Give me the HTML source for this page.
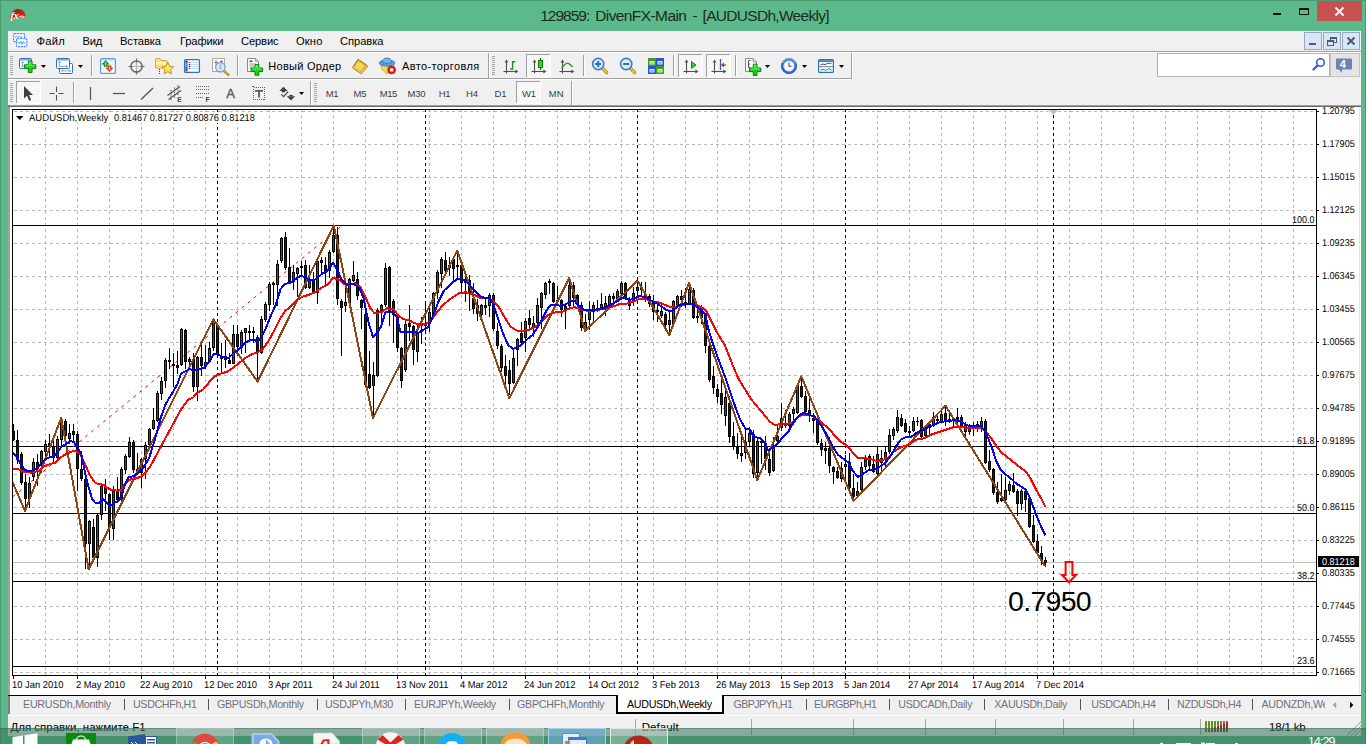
<!DOCTYPE html>
<html><head><meta charset="utf-8"><title>MT4</title>
<style>
html,body{margin:0;padding:0;overflow:hidden;}
body{width:1369px;height:744px;overflow:hidden;background:#fff;position:relative;font-family:"Liberation Sans",sans-serif;}
.abs{position:absolute;}
.t{position:absolute;white-space:nowrap;line-height:1;}
svg{position:absolute;left:0;top:0;overflow:visible;}
#root{position:absolute;left:0;top:0;width:1369px;height:744px;overflow:hidden;}
</style></head><body><div id="root">

<div class="abs" style="left:0;top:0;width:1366px;height:744px;background:#5cb98b;"></div><div class="abs" style="left:0;top:0;width:1366px;height:1px;background:#4a9b72;"></div><div class="abs" style="left:0;top:0;width:1px;height:744px;background:#4a9b72;"></div><div class="abs" style="left:1365px;top:0;width:1px;height:744px;background:#4a9b72;"></div><div class="abs" style="left:8px;top:31px;width:1353px;height:705px;background:#f0f0f0;"></div><div class="t" style="left:540.20px;top:8.38px;font-size:15.5px;color:#1c2a22;letter-spacing:-0.989px;">129859:</div><div class="t" style="left:595.20px;top:8.38px;font-size:15.5px;color:#1c2a22;letter-spacing:-0.591px;">DivenFX-Main</div><div class="t" style="left:692.60px;top:8.38px;font-size:15.5px;color:#1c2a22;">-</div><div class="t" style="left:702.60px;top:8.38px;font-size:15.5px;color:#1c2a22;letter-spacing:-0.701px;">[AUDUSDh,Weekly]</div><div class="abs" style="left:1317px;top:1px;width:45px;height:20px;background:#c75050;"></div><svg width="1369" height="31"><g stroke="#fff" stroke-width="1.8"><line x1="1335.5" y1="7.5" x2="1343.5" y2="15.5"/><line x1="1343.5" y1="7.5" x2="1335.5" y2="15.5"/></g><rect x="1273" y="13" width="8" height="2" fill="#111"/><rect x="1299.5" y="8.5" width="9" height="6" fill="none" stroke="#111"/><rect x="1299" y="8" width="10" height="2" fill="#111"/></svg>
<div class="t" style="left:36.50px;top:35.52px;font-size:11.2px;color:#000;letter-spacing:0.241px;">Файл</div><div class="t" style="left:82.50px;top:35.52px;font-size:11.2px;color:#000;letter-spacing:-0.254px;">Вид</div><div class="t" style="left:120.00px;top:35.52px;font-size:11.2px;color:#000;letter-spacing:-0.090px;">Вставка</div><div class="t" style="left:180.00px;top:35.52px;font-size:11.2px;color:#000;letter-spacing:-0.146px;">Графики</div><div class="t" style="left:241.00px;top:35.52px;font-size:11.2px;color:#000;letter-spacing:-0.142px;">Сервис</div><div class="t" style="left:296.00px;top:35.52px;font-size:11.2px;color:#000;letter-spacing:0.119px;">Окно</div><div class="t" style="left:340.00px;top:35.52px;font-size:11.2px;color:#000;letter-spacing:-0.062px;">Справка</div>
<svg width="1369" height="110"><defs><pattern id="chk" width="2" height="2" patternUnits="userSpaceOnUse"><rect width="2" height="2" fill="#f0f0f0"/><rect width="1" height="1" fill="#fff"/><rect x="1" y="1" width="1" height="1" fill="#fff"/></pattern></defs><rect x="8" y="51" width="1353" height="1" fill="#a0a0a0"/><rect x="8" y="52" width="1353" height="1" fill="#fff"/><rect x="8" y="78" width="843" height="1" fill="#a0a0a0"/><rect x="8" y="79" width="844" height="1" fill="#fff"/><rect x="851" y="53" width="1" height="26" fill="#a0a0a0"/><rect x="852" y="53" width="1" height="27" fill="#fff"/><rect x="10" y="56" width="3" height="1" fill="#a8a8a8"/><rect x="10" y="58" width="3" height="1" fill="#a8a8a8"/><rect x="10" y="60" width="3" height="1" fill="#a8a8a8"/><rect x="10" y="62" width="3" height="1" fill="#a8a8a8"/><rect x="10" y="64" width="3" height="1" fill="#a8a8a8"/><rect x="10" y="66" width="3" height="1" fill="#a8a8a8"/><rect x="10" y="68" width="3" height="1" fill="#a8a8a8"/><rect x="10" y="70" width="3" height="1" fill="#a8a8a8"/><rect x="10" y="72" width="3" height="1" fill="#a8a8a8"/><rect x="10" y="74" width="3" height="1" fill="#a8a8a8"/><rect x="19.5" y="58.5" width="12" height="10" rx="1" fill="#fdfeff" stroke="#2f6fb8"/><rect x="20" y="59" width="11" height="1.6" fill="#7fb0e6"/><path d="M22.5 61.8 V66.8 M21.2 63 L22.5 61.6 L23.8 63 M21.2 65.6 L22.5 67 L23.8 65.6" stroke="#8aa4c4" fill="none" stroke-width="0.9"/><path d="M28.3 61 H32 V64.8 H35.8 V68.6 H32 V72.6 H28.3 V68.6 H24.4 V64.8 H28.3 Z" fill="#19d419" stroke="#0a7f0a" stroke-width="1"/><path d="M29.3 62 H31 V65.8 H34.8 M25.4 65.8 H29.3 V62" stroke="#9dff9d" stroke-width="0.8" fill="none" opacity="0.8"/><path d="M41 65 L46 65 L43.5 68 Z" fill="#000"/><rect x="59.5" y="63.5" width="13" height="10" rx="1" fill="#fdfeff" stroke="#2f6fb8"/><rect x="56.5" y="58.5" width="13" height="10" rx="1" fill="#fdfeff" stroke="#2f6fb8"/><rect x="57" y="59" width="12" height="1.6" fill="#7fb0e6"/><path d="M59.5 61.6 V66.4 M58.3 62.8 L59.5 61.5 L60.7 62.8 M58.5 66.4 H67.5 M66 65.2 L67.6 66.4 L66 67.6" stroke="#7f9fc8" fill="none" stroke-width="0.9"/><path d="M61.5 70.8 H70.5 M62.8 69.6 L61.4 70.8 L62.8 72 M69.2 69.6 L70.6 70.8 L69.2 72" stroke="#7f9fc8" fill="none" stroke-width="0.9"/><path d="M78 65 L83 65 L80.5 68 Z" fill="#000"/><rect x="91" y="55" width="1" height="21" fill="#a0a0a0"/><rect x="92" y="55" width="1" height="21" fill="#fff"/><rect x="100.6" y="58.6" width="14.8" height="14.8" rx="1.2" fill="#fbfdff" stroke="#5a9be0" stroke-width="1.3"/><rect x="101.2" y="59.2" width="13.6" height="1.4" fill="#a9cdf3"/><path d="M109.5 62.5 H113.5 M109.5 64.5 H113.5 M102.5 68.5 H106 M102.5 70.5 H106" stroke="#e0e4ea" stroke-width="0.8"/><path d="M104 66.6 V64.2 H102.2 L105.6 60.6 L109 64.2 H107.2 V66.6 Z" fill="#27a827" stroke="#157015" stroke-width="0.6"/><path d="M105.6 62.3 V65.6" stroke="#b8f0b8" stroke-width="0.9"/><path d="M107.9 65.8 V68.2 H106.1 L109.5 71.8 L112.9 68.2 H111.1 V65.8 Z" fill="#e8501e" stroke="#b03810" stroke-width="0.6"/><path d="M109.5 66.8 V70" stroke="#ffd0b8" stroke-width="0.9"/><g stroke="#686868" fill="none"><path d="M136.5 58.5 V74.5 M128.5 66.5 H144.5" stroke-width="1.1"/><circle cx="136.5" cy="66.5" r="5.6" stroke-width="1.5"/></g><path d="M136.5 62.5 V70.5 M132.5 66.5 H140.5" stroke="#b8b8b8" stroke-width="1.1"/><path d="M155.5 59.5 Q155.5 58.5 156.5 58.5 L160 58.5 L161.5 60.5 L166 60.5 Q167 60.5 167 61.5 L167 68 L155.5 68 Z" fill="#f8e27c" stroke="#caa42a" stroke-width="0.9"/><path d="M156 62 H166.5 V64.5 H156 Z" fill="#fff6b8" opacity="0.8"/><path d="M167.8 62.3 L169.6 66.3 L173.6 66.8 L170.6 69.6 L171.5 73.9 L167.8 71.7 L164.1 73.9 L165 69.6 L162 66.8 L166 66.3 Z" fill="#ffe45a" stroke="#b8860b" stroke-width="0.9"/><path d="M167.8 64.5 L168.8 67 L166.8 67 Z" fill="#fff8c0"/><rect x="159" y="69" width="1" height="1" fill="#404040"/><rect x="159" y="71" width="1" height="1" fill="#404040"/><rect x="159" y="73" width="1" height="1" fill="#404040"/><rect x="184.6" y="59.6" width="14.8" height="12.8" rx="1.2" fill="#fff" stroke="#2f6fc0" stroke-width="1.3"/><rect x="185.3" y="60.3" width="2.4" height="11.4" fill="#5a94d8"/><rect x="185.8" y="61" width="1.4" height="1.4" fill="#101010"/><rect x="185.8" y="67" width="1.4" height="4" fill="#505860"/><path d="M190 62.5 H198.5 M190 64.5 H198.5 M190 66.5 H198.5 M190 68.5 H198.5" stroke="#c4d8f4" stroke-width="1"/><rect x="188.8" y="62" width="1.3" height="1.2" fill="#e02020"/><rect x="188.8" y="64" width="1.3" height="1.2" fill="#203020"/><rect x="188.8" y="66" width="1.3" height="1.2" fill="#203020"/><rect x="188.8" y="68" width="1.3" height="1.2" fill="#e02020"/><rect x="212.5" y="58.5" width="12" height="13" fill="#fbfbf8" stroke="#b4aa94"/><path d="M214.5 62.5 H218 M216 60 V66 M221.5 60 V65 M220 61.5 H223" stroke="#707888" stroke-width="0.9" fill="none"/><line x1="224" y1="70.8" x2="228.3" y2="74.6" stroke="#b8860b" stroke-width="2.6" stroke-linecap="round"/><line x1="224.3" y1="70.6" x2="228" y2="74" stroke="#f0d050" stroke-width="1" stroke-linecap="round"/><circle cx="220.4" cy="67.3" r="4.7" fill="#d6e8f8" fill-opacity="0.88" stroke="#6fa0dc" stroke-width="1.3"/><rect x="219" y="64.5" width="2.6" height="5" fill="#a8b4c0" opacity="0.8"/><rect x="237" y="55" width="1" height="21" fill="#a0a0a0"/><rect x="238" y="55" width="1" height="21" fill="#fff"/><path d="M247.5 58.5 H255.5 L258.5 61.5 V71.5 H247.5 Z" fill="#fcfcfc" stroke="#8a8a8a"/><path d="M255.5 58.5 V61.5 H258.5" fill="none" stroke="#8a8a8a" stroke-width="0.8"/><rect x="249.5" y="60.5" width="3" height="1.6" fill="#505050"/><path d="M249.5 64 H256 M249.5 66 H254 M249.5 68 H252" stroke="#8c8c8c" stroke-width="0.9"/><path d="M255 64.6 H258.8 V68 H262.6 V71.6 H258.8 V75.2 H255 V71.6 H251.2 V68 H255 Z" fill="#19d419" stroke="#0a7f0a" stroke-width="1"/><path d="M256 65.6 H257.8 V69 H261.6 M252.2 69 H256 V65.6" stroke="#9dff9d" stroke-width="0.8" fill="none" opacity="0.8"/><path d="M352.3 67.8 L358 59.2 L368 66 L361.2 73.8 Z" fill="#d9a520" stroke="#9c6f08" stroke-width="0.9"/><path d="M354.5 67 L358.3 61.2 L365 65.8 L360.5 71 Z" fill="#f3d563"/><path d="M352.3 67.8 L361.2 73.8 L368 66" fill="none" stroke="#fff0b0" stroke-width="1.1" transform="translate(0,-1.1)" opacity="0.55"/><path d="M381 64.5 L394 63.5 L393 69 L386.5 74 L381.5 68.5 Z" fill="#f7d84e" stroke="#c9a21c" stroke-width="0.8"/><ellipse cx="387" cy="63" rx="7.8" ry="3.1" fill="#58a3e6" stroke="#2f6fb8" stroke-width="0.8"/><path d="M382.3 62.6 Q382.5 58 387 58 Q391.5 58 391.7 62.6 Q387 64.3 382.3 62.6 Z" fill="#74b6f2" stroke="#2f6fb8" stroke-width="0.8"/><circle cx="391.6" cy="69.9" r="4" fill="#e11d14" stroke="#b01008" stroke-width="0.6"/><rect x="390" y="68.4" width="3.2" height="3" fill="#fff"/><rect x="488" y="53" width="1" height="25" fill="#a0a0a0"/><rect x="489" y="53" width="1" height="25" fill="#fff"/><rect x="492" y="56" width="3" height="1" fill="#a8a8a8"/><rect x="492" y="58" width="3" height="1" fill="#a8a8a8"/><rect x="492" y="60" width="3" height="1" fill="#a8a8a8"/><rect x="492" y="62" width="3" height="1" fill="#a8a8a8"/><rect x="492" y="64" width="3" height="1" fill="#a8a8a8"/><rect x="492" y="66" width="3" height="1" fill="#a8a8a8"/><rect x="492" y="68" width="3" height="1" fill="#a8a8a8"/><rect x="492" y="70" width="3" height="1" fill="#a8a8a8"/><rect x="492" y="72" width="3" height="1" fill="#a8a8a8"/><rect x="492" y="74" width="3" height="1" fill="#a8a8a8"/><g stroke="#505050" stroke-width="1.1" fill="none"><path d="M506.5 60.5 V73.5"/><path d="M503.5 71.5 H517"/></g><path d="M504.6 62.6 L506.5 59.6 L508.4 62.6 Z" fill="#505050"/><path d="M515.4 69.6 L518.4 71.5 L515.4 73.4 Z" fill="#505050"/><path d="M512.6 61 V69.8 M512.6 61.7 H515.2 M510.2 69 H512.6" stroke="#1f8f1f" stroke-width="1.4" fill="none"/><rect x="526" y="54" width="25" height="24" fill="url(#chk)"/><rect x="526" y="54" width="25" height="1" fill="#a0a0a0"/><rect x="526" y="54" width="1" height="24" fill="#a0a0a0"/><rect x="526" y="77" width="25" height="1" fill="#fff"/><rect x="550" y="54" width="1" height="24" fill="#fff"/><g stroke="#505050" stroke-width="1.1" fill="none"><path d="M534.5 60.5 V73.5"/><path d="M531.5 71.5 H545"/></g><path d="M532.6 62.6 L534.5 59.6 L536.4 62.6 Z" fill="#505050"/><path d="M543.4 69.6 L546.4 71.5 L543.4 73.4 Z" fill="#505050"/><path d="M540.5 58 V70" stroke="#0a6a0a" stroke-width="1.2"/><rect x="538.5" y="60.5" width="4" height="7" fill="#22e022" stroke="#0a7a0a"/><g stroke="#505050" stroke-width="1.1" fill="none"><path d="M562.5 60.5 V73.5"/><path d="M559.5 71.5 H573"/></g><path d="M560.6 62.6 L562.5 59.6 L564.4 62.6 Z" fill="#505050"/><path d="M571.4 69.6 L574.4 71.5 L571.4 73.4 Z" fill="#505050"/><path d="M561.5 68.3 C564 65.5 565.5 63 567.5 63.2 C569.5 63.4 570.5 65.5 572.8 66.8" stroke="#1f8f1f" stroke-width="1.3" fill="none"/><rect x="583" y="55" width="1" height="21" fill="#a0a0a0"/><rect x="584" y="55" width="1" height="21" fill="#fff"/><line x1="602.2" y1="68.0" x2="606.7" y2="72.5" stroke="#b8860b" stroke-width="3.2" stroke-linecap="round"/><line x1="602.2" y1="68.0" x2="606.7" y2="72.5" stroke="#f0d060" stroke-width="1.6" stroke-linecap="round"/><circle cx="598.2" cy="64.0" r="5.6" fill="#dcecfb" stroke="#3b7cc4" stroke-width="1.6"/><rect x="595.2" y="63.0" width="6" height="2" fill="#2f6fb8"/><rect x="597.2" y="61.0" width="2" height="6" fill="#2f6fb8"/><line x1="630.2" y1="68.0" x2="634.7" y2="72.5" stroke="#b8860b" stroke-width="3.2" stroke-linecap="round"/><line x1="630.2" y1="68.0" x2="634.7" y2="72.5" stroke="#f0d060" stroke-width="1.6" stroke-linecap="round"/><circle cx="626.2" cy="64.0" r="5.6" fill="#dcecfb" stroke="#3b7cc4" stroke-width="1.6"/><rect x="623.2" y="63.0" width="6" height="2" fill="#2f6fb8"/><rect x="648" y="58" width="8" height="8" fill="#3f9c1f"/><rect x="656" y="58" width="8" height="8" fill="#2456d6"/><rect x="648" y="66" width="8" height="8" fill="#2456d6"/><rect x="656" y="66" width="8" height="8" fill="#3f9c1f"/><rect x="649.5" y="61" width="5" height="3.5" fill="#e6f4dc"/><rect x="657.5" y="61" width="5" height="3.5" fill="#dfe8fb"/><rect x="649.5" y="69" width="5" height="3.5" fill="#dfe8fb"/><rect x="657.5" y="69" width="5" height="3.5" fill="#e6f4dc"/><path d="M650.5 63 H653.5" stroke="#3f9c1f" stroke-width="0.8"/><path d="M658.5 63 H661.5" stroke="#2456d6" stroke-width="0.8"/><path d="M650.5 71 H653.5" stroke="#2456d6" stroke-width="0.8"/><path d="M658.5 71 H661.5" stroke="#3f9c1f" stroke-width="0.8"/><rect x="673" y="55" width="1" height="21" fill="#a0a0a0"/><rect x="674" y="55" width="1" height="21" fill="#fff"/><rect x="678" y="54" width="25" height="24" fill="url(#chk)"/><rect x="678" y="54" width="25" height="1" fill="#a0a0a0"/><rect x="678" y="54" width="1" height="24" fill="#a0a0a0"/><rect x="678" y="77" width="25" height="1" fill="#fff"/><rect x="702" y="54" width="1" height="24" fill="#fff"/><g stroke="#505050" stroke-width="1.1" fill="none"><path d="M686.5 60.5 V73.5"/><path d="M683.5 71.5 H697"/></g><path d="M684.6 62.6 L686.5 59.6 L688.4 62.6 Z" fill="#505050"/><path d="M695.4 69.6 L698.4 71.5 L695.4 73.4 Z" fill="#505050"/><path d="M691.5 61.5 L696 65 L691.5 68.5 Z" fill="#2fd02f" stroke="#0a7a0a" stroke-width="0.9"/><rect x="706" y="54" width="25" height="24" fill="url(#chk)"/><rect x="706" y="54" width="25" height="1" fill="#a0a0a0"/><rect x="706" y="54" width="1" height="24" fill="#a0a0a0"/><rect x="706" y="77" width="25" height="1" fill="#fff"/><rect x="730" y="54" width="1" height="24" fill="#fff"/><g stroke="#505050" stroke-width="1.1" fill="none"><path d="M714.5 60.5 V73.5"/><path d="M711.5 71.5 H725"/></g><path d="M712.6 62.6 L714.5 59.6 L716.4 62.6 Z" fill="#505050"/><path d="M723.4 69.6 L726.4 71.5 L723.4 73.4 Z" fill="#505050"/><path d="M720.5 59 V70" stroke="#2060c0" stroke-width="1.3"/><path d="M726 65 H722" stroke="#c03010" stroke-width="1.2"/><path d="M724 62.5 L721 65 L724 67.5 Z" fill="#c03010"/><rect x="735" y="55" width="1" height="21" fill="#a0a0a0"/><rect x="736" y="55" width="1" height="21" fill="#fff"/><path d="M745.5 58.5 H753 L756.5 62 V71.5 H745.5 Z" fill="#fcfcfc" stroke="#8a8a8a"/><path d="M753 58.5 V62 H756.5" fill="none" stroke="#8a8a8a" stroke-width="0.8"/><path d="M750.5 60.5 H748.5 V67.5 H750 M748.5 64 H750" stroke="#505050" fill="none" stroke-width="1"/><path d="M753.3 64.2 H757 V68 H760.8 V71.6 H757 V75.4 H753.3 V71.6 H749.5 V68 H753.3 Z" fill="#19d419" stroke="#0a7f0a" stroke-width="1"/><path d="M754.3 65.2 H756 V69 H759.8 M750.5 69 H754.3 V65.2" stroke="#9dff9d" stroke-width="0.8" fill="none" opacity="0.8"/><path d="M765 65 L770 65 L767.5 68 Z" fill="#000"/><circle cx="789" cy="66" r="7.7" fill="#2a6cd4" stroke="#1a4a9a" stroke-width="0.7"/><path d="M782.5 63 A7 7 0 0 1 795.5 63" stroke="#7fb4f4" stroke-width="1.4" fill="none"/><circle cx="789" cy="66" r="5.3" fill="#f6f9fd" stroke="#c8d4e4" stroke-width="0.6"/><path d="M789 62.8 V66.2 H791.6" stroke="#505050" stroke-width="1.1" fill="none"/><path d="M789 61.3 V62 M789 70 V70.7 M784.3 66 H785 M793 66 H793.7" stroke="#a0a8b4" stroke-width="0.8"/><path d="M802 65 L807 65 L804.5 68 Z" fill="#000"/><rect x="818.6" y="59.6" width="14.8" height="12.8" rx="1" fill="#fbfdff" stroke="#2f6fc0" stroke-width="1.2"/><rect x="819.2" y="60.2" width="13.6" height="1.8" fill="#3b7ed0"/><path d="M819 66.6 H833" stroke="#6a9ee0" stroke-width="1.2"/><path d="M820.5 64.8 L823 64 L825 64.6 L828 63.2 L831.5 63.4" stroke="#b03030" fill="none" stroke-width="1"/><path d="M820.5 70.3 L823 69.3 L825.5 70.4 L828.5 68.6 L831.5 70" stroke="#1f9f1f" fill="none" stroke-width="1"/><path d="M839 65 L844 65 L841.5 68 Z" fill="#000"/><rect x="1157.5" y="53.5" width="172" height="23" fill="#fff" stroke="#b0b0b0"/><line x1="1313.5" y1="69.5" x2="1318" y2="65" stroke="#2f5fd0" stroke-width="2.4" stroke-linecap="round"/><circle cx="1320.5" cy="62.5" r="3.8" fill="#fff" stroke="#2f5fd0" stroke-width="1.6"/><rect x="1330.5" y="53.5" width="29" height="23" fill="#e4e4e4" stroke="#c4c4c4"/><path d="M1337 58.5 H1351 Q1352 58.5 1352 59.5 V68.5 Q1352 69.5 1351 69.5 H1342 L1341.5 73 L1339 69.5 H1337 Q1336 69.5 1336 68.5 V59.5 Q1336 58.5 1337 58.5 Z" fill="#6c83b8"/><rect x="10" y="83" width="3" height="1" fill="#a8a8a8"/><rect x="10" y="85" width="3" height="1" fill="#a8a8a8"/><rect x="10" y="87" width="3" height="1" fill="#a8a8a8"/><rect x="10" y="89" width="3" height="1" fill="#a8a8a8"/><rect x="10" y="91" width="3" height="1" fill="#a8a8a8"/><rect x="10" y="93" width="3" height="1" fill="#a8a8a8"/><rect x="10" y="95" width="3" height="1" fill="#a8a8a8"/><rect x="10" y="97" width="3" height="1" fill="#a8a8a8"/><rect x="10" y="99" width="3" height="1" fill="#a8a8a8"/><rect x="10" y="101" width="3" height="1" fill="#a8a8a8"/><rect x="16" y="81" width="25" height="23" fill="url(#chk)"/><rect x="16" y="81" width="25" height="1" fill="#a0a0a0"/><rect x="16" y="81" width="1" height="23" fill="#a0a0a0"/><rect x="16" y="103" width="25" height="1" fill="#fff"/><rect x="40" y="81" width="1" height="23" fill="#fff"/><path d="M24 86 L24 98.5 L27 95.8 L29.2 100.8 L31.2 99.9 L29 95 L33 95 Z" fill="#404040"/><path d="M56.5 86.5 V92 M56.5 95 V100.5 M49.5 93.5 H54.5 M58.5 93.5 H63.5" stroke="#505050" stroke-width="1.1"/><rect x="73" y="82" width="1" height="21" fill="#a0a0a0"/><rect x="74" y="82" width="1" height="21" fill="#fff"/><path d="M90.5 87 V100" stroke="#505050" stroke-width="1.2"/><path d="M113 93.5 H125" stroke="#505050" stroke-width="1.2"/><path d="M141 99.5 L153 88" stroke="#505050" stroke-width="1.2"/><g stroke="#505050" stroke-width="1.1" fill="none"><path d="M167.5 95.5 L180 86.5 M168.5 99.5 L181 90.5"/><path d="M171 90 V100 M174.5 87.5 V98 M178 85 V95.5" stroke-dasharray="1.2,1"/></g><g stroke="#606060" stroke-width="1" stroke-dasharray="1,1"><path d="M196 86.5 H209 M196 89.5 H209 M196 93.5 H209 M196 97.5 H204"/></g><rect x="253.5" y="87.5" width="11" height="12" fill="none" stroke="#606060" stroke-dasharray="1,1" shape-rendering="crispEdges"/><rect x="252" y="86" width="2" height="1" fill="#606060"/><rect x="255" y="90" width="8" height="1.7" fill="#585858"/><rect x="258.1" y="90" width="1.8" height="7.5" fill="#585858"/><path d="M279.3 91 L283.5 86.8 L287.7 91 Z" fill="#404040"/><rect x="281.8" y="91" width="3.4" height="1.3" fill="#404040"/><path d="M286.8 96.2 L291 100.4 L295.2 96.2 Z" fill="#404040"/><rect x="289.3" y="94.9" width="3.4" height="1.3" fill="#404040"/><path d="M281.3 94.3 L283.6 96.6 L288.2 91.6" stroke="#404040" fill="none" stroke-width="1.2"/><path d="M299 92 L304 92 L301.5 95 Z" fill="#000"/><rect x="310" y="81" width="1" height="24" fill="#a0a0a0"/><rect x="311" y="81" width="1" height="24" fill="#fff"/><rect x="314" y="83" width="3" height="1" fill="#a8a8a8"/><rect x="314" y="85" width="3" height="1" fill="#a8a8a8"/><rect x="314" y="87" width="3" height="1" fill="#a8a8a8"/><rect x="314" y="89" width="3" height="1" fill="#a8a8a8"/><rect x="314" y="91" width="3" height="1" fill="#a8a8a8"/><rect x="314" y="93" width="3" height="1" fill="#a8a8a8"/><rect x="314" y="95" width="3" height="1" fill="#a8a8a8"/><rect x="314" y="97" width="3" height="1" fill="#a8a8a8"/><rect x="314" y="99" width="3" height="1" fill="#a8a8a8"/><rect x="314" y="101" width="3" height="1" fill="#a8a8a8"/><rect x="516" y="81" width="25" height="23" fill="url(#chk)"/><rect x="516" y="81" width="25" height="1" fill="#a0a0a0"/><rect x="516" y="81" width="1" height="23" fill="#a0a0a0"/><rect x="516" y="103" width="25" height="1" fill="#fff"/><rect x="540" y="81" width="1" height="23" fill="#fff"/><rect x="571" y="81" width="1" height="24" fill="#a0a0a0"/><rect x="572" y="81" width="1" height="24" fill="#fff"/><rect x="1304.5" y="32.5" width="17" height="17" fill="#dbe6f4" stroke="#93a9c9"/><rect x="1323.5" y="32.5" width="17" height="17" fill="#dbe6f4" stroke="#93a9c9"/><rect x="1342.5" y="32.5" width="17" height="17" fill="#dbe6f4" stroke="#93a9c9"/><rect x="1309" y="43" width="7" height="2" fill="#4a5a78"/><g stroke="#4a5a78" fill="#dbe6f4"><rect x="1330.5" y="37.5" width="6" height="5" /><rect x="1327.5" y="40.5" width="6" height="5"/></g><rect x="1330" y="37" width="7" height="2" fill="#4a5a78"/><rect x="1327" y="40" width="7" height="2" fill="#4a5a78"/><path d="M1347.5 37.5 L1354.5 44.5 M1354.5 37.5 L1347.5 44.5" stroke="#4a5a78" stroke-width="2"/><rect x="13.6" y="33.6" width="11" height="8" rx="0.8" fill="#fff" stroke="#4d8dff" stroke-width="1.2" stroke-dasharray="2.2,0.7"/><rect x="16.6" y="38.6" width="10.2" height="8" rx="0.8" fill="#fff" stroke="#4d8dff" stroke-width="1.2" stroke-dasharray="2.2,0.7"/><path d="M18.3 42 L19.6 43.6 L20.8 41.4 L22 44.4 L23.3 41.6 L24.6 43.6" stroke="#4d8dff" fill="none" stroke-width="1"/><path d="M15.2 37.6 L16.6 36.4 L18 37.4 L19.4 36.2 L21 37.6 L22.6 36.6" stroke="#4d8dff" fill="none" stroke-width="1"/><defs><linearGradient id="apg" x1="0" y1="0" x2="1" y2="1"><stop offset="0" stop-color="#8e1608"/><stop offset="0.55" stop-color="#bf2a1a"/><stop offset="1" stop-color="#d8483a"/></linearGradient></defs><path d="M10.6 20.6 C9.4 14 13 9 18 9 C23.2 9 26.4 13 25.6 18.2 C23 19.2 20 17.2 17 17.6 C14 18 12 19.6 10.6 20.6 Z" fill="url(#apg)"/><path d="M18 16.6 C20.5 15 24.4 15.2 25.7 18 C23.5 19.2 20.5 18 18 16.6 Z" fill="#f4aaa0"/></svg><div class="t" style="left:177.30px;top:96.50px;font-size:6.5px;color:#404040;font-weight:bold;">E</div><div class="t" style="left:205.50px;top:96.50px;font-size:6.5px;color:#404040;font-weight:bold;">F</div><div class="t" style="left:226.20px;top:87.20px;font-size:13px;color:#585858;-webkit-text-stroke:0.35px #585858;">A</div><div class="t" style="left:325.80px;top:88.76px;font-size:9.5px;color:#3c3c3c;letter-spacing:-0.398px;">M1</div><div class="t" style="left:353.60px;top:88.76px;font-size:9.5px;color:#3c3c3c;letter-spacing:-0.198px;">M5</div><div class="t" style="left:379.70px;top:88.76px;font-size:9.5px;color:#3c3c3c;letter-spacing:-0.393px;">M15</div><div class="t" style="left:407.60px;top:88.76px;font-size:9.5px;color:#3c3c3c;letter-spacing:-0.226px;">M30</div><div class="t" style="left:438.70px;top:88.76px;font-size:9.5px;color:#3c3c3c;letter-spacing:-0.422px;">H1</div><div class="t" style="left:465.90px;top:88.76px;font-size:9.5px;color:#3c3c3c;letter-spacing:-0.022px;">H4</div><div class="t" style="left:494.60px;top:88.76px;font-size:9.5px;color:#3c3c3c;letter-spacing:-0.122px;">D1</div><div class="t" style="left:522.00px;top:88.76px;font-size:9.5px;color:#3c3c3c;letter-spacing:-0.125px;">W1</div><div class="t" style="left:548.80px;top:88.76px;font-size:9.5px;color:#3c3c3c;letter-spacing:-0.037px;">MN</div><div class="t" style="left:268.30px;top:61.09px;font-size:11px;color:#000;letter-spacing:0.283px;">Новый Ордер</div><div class="t" style="left:402.00px;top:61.09px;font-size:11px;color:#000;letter-spacing:0.382px;">Авто-торговля</div><div class="t" style="left:1339.70px;top:58.99px;font-size:11px;color:#fff;font-weight:bold;">4</div><div class="t" style="left:10.60px;top:10.71px;font-size:10.5px;color:#fff;font-style:italic;font-weight:bold;font-family:'Liberation Serif',serif;letter-spacing:-0.6px;">fx</div>
<div class="abs" style="left:8px;top:105px;width:1353px;height:1px;background:#a0a0a0;"></div><div class="abs" style="left:8px;top:106px;width:1353px;height:1px;background:#696969;"></div><div class="abs" style="left:8px;top:107px;width:2px;height:588px;background:#a0a0a0;"></div><div class="abs" style="left:10px;top:107px;width:1351px;height:588px;background:#fff;"></div><div class="abs" style="left:1359px;top:107px;width:1px;height:588px;background:#e3e3e3;"></div>
<svg width="1369" height="744" viewBox="0 0 1369 744"><g stroke="#b9b9b9" stroke-width="1" stroke-dasharray="3,3" shape-rendering="crispEdges"><line x1="13" y1="111.5" x2="1317" y2="111.5" stroke-dashoffset="5"/><line x1="13" y1="144.5" x2="1317" y2="144.5" stroke-dashoffset="5"/><line x1="13" y1="177.5" x2="1317" y2="177.5" stroke-dashoffset="5"/><line x1="13" y1="210.5" x2="1317" y2="210.5" stroke-dashoffset="5"/><line x1="13" y1="243.5" x2="1317" y2="243.5" stroke-dashoffset="5"/><line x1="13" y1="276.5" x2="1317" y2="276.5" stroke-dashoffset="5"/><line x1="13" y1="309.5" x2="1317" y2="309.5" stroke-dashoffset="5"/><line x1="13" y1="342.5" x2="1317" y2="342.5" stroke-dashoffset="5"/><line x1="13" y1="375.5" x2="1317" y2="375.5" stroke-dashoffset="5"/><line x1="13" y1="408.5" x2="1317" y2="408.5" stroke-dashoffset="5"/><line x1="13" y1="441.5" x2="1317" y2="441.5" stroke-dashoffset="5"/><line x1="13" y1="474.5" x2="1317" y2="474.5" stroke-dashoffset="5"/><line x1="13" y1="507.5" x2="1317" y2="507.5" stroke-dashoffset="5"/><line x1="13" y1="540.5" x2="1317" y2="540.5" stroke-dashoffset="5"/><line x1="13" y1="573.5" x2="1317" y2="573.5" stroke-dashoffset="5"/><line x1="13" y1="606.5" x2="1317" y2="606.5" stroke-dashoffset="5"/><line x1="13" y1="639.5" x2="1317" y2="639.5" stroke-dashoffset="5"/><line x1="13" y1="672.5" x2="1317" y2="672.5" stroke-dashoffset="5"/><line x1="45.5" y1="110" x2="45.5" y2="676" stroke-dashoffset="1"/><line x1="77.5" y1="110" x2="77.5" y2="676" stroke-dashoffset="1"/><line x1="109.5" y1="110" x2="109.5" y2="676" stroke-dashoffset="1"/><line x1="141.5" y1="110" x2="141.5" y2="676" stroke-dashoffset="1"/><line x1="173.5" y1="110" x2="173.5" y2="676" stroke-dashoffset="1"/><line x1="205.5" y1="110" x2="205.5" y2="676" stroke-dashoffset="1"/><line x1="237.5" y1="110" x2="237.5" y2="676" stroke-dashoffset="1"/><line x1="269.5" y1="110" x2="269.5" y2="676" stroke-dashoffset="1"/><line x1="301.5" y1="110" x2="301.5" y2="676" stroke-dashoffset="1"/><line x1="333.5" y1="110" x2="333.5" y2="676" stroke-dashoffset="1"/><line x1="365.5" y1="110" x2="365.5" y2="676" stroke-dashoffset="1"/><line x1="397.5" y1="110" x2="397.5" y2="676" stroke-dashoffset="1"/><line x1="429.5" y1="110" x2="429.5" y2="676" stroke-dashoffset="1"/><line x1="461.5" y1="110" x2="461.5" y2="676" stroke-dashoffset="1"/><line x1="493.5" y1="110" x2="493.5" y2="676" stroke-dashoffset="1"/><line x1="525.5" y1="110" x2="525.5" y2="676" stroke-dashoffset="1"/><line x1="557.5" y1="110" x2="557.5" y2="676" stroke-dashoffset="1"/><line x1="589.5" y1="110" x2="589.5" y2="676" stroke-dashoffset="1"/><line x1="621.5" y1="110" x2="621.5" y2="676" stroke-dashoffset="1"/><line x1="653.5" y1="110" x2="653.5" y2="676" stroke-dashoffset="1"/><line x1="685.5" y1="110" x2="685.5" y2="676" stroke-dashoffset="1"/><line x1="717.5" y1="110" x2="717.5" y2="676" stroke-dashoffset="1"/><line x1="749.5" y1="110" x2="749.5" y2="676" stroke-dashoffset="1"/><line x1="781.5" y1="110" x2="781.5" y2="676" stroke-dashoffset="1"/><line x1="813.5" y1="110" x2="813.5" y2="676" stroke-dashoffset="1"/><line x1="845.5" y1="110" x2="845.5" y2="676" stroke-dashoffset="1"/><line x1="877.5" y1="110" x2="877.5" y2="676" stroke-dashoffset="1"/><line x1="909.5" y1="110" x2="909.5" y2="676" stroke-dashoffset="1"/><line x1="941.5" y1="110" x2="941.5" y2="676" stroke-dashoffset="1"/><line x1="973.5" y1="110" x2="973.5" y2="676" stroke-dashoffset="1"/><line x1="1005.5" y1="110" x2="1005.5" y2="676" stroke-dashoffset="1"/><line x1="1037.5" y1="110" x2="1037.5" y2="676" stroke-dashoffset="1"/><line x1="1069.5" y1="110" x2="1069.5" y2="676" stroke-dashoffset="1"/><line x1="1101.5" y1="110" x2="1101.5" y2="676" stroke-dashoffset="1"/><line x1="1133.5" y1="110" x2="1133.5" y2="676" stroke-dashoffset="1"/><line x1="1165.5" y1="110" x2="1165.5" y2="676" stroke-dashoffset="1"/><line x1="1197.5" y1="110" x2="1197.5" y2="676" stroke-dashoffset="1"/><line x1="1229.5" y1="110" x2="1229.5" y2="676" stroke-dashoffset="1"/><line x1="1261.5" y1="110" x2="1261.5" y2="676" stroke-dashoffset="1"/><line x1="1293.5" y1="110" x2="1293.5" y2="676" stroke-dashoffset="1"/></g><g stroke="#000" stroke-width="1" stroke-dasharray="3,3" shape-rendering="crispEdges"><line x1="217.5" y1="110" x2="217.5" y2="676" stroke-dashoffset="1"/><line x1="425.5" y1="110" x2="425.5" y2="676" stroke-dashoffset="1"/><line x1="637.5" y1="110" x2="637.5" y2="676" stroke-dashoffset="1"/><line x1="845.5" y1="110" x2="845.5" y2="676" stroke-dashoffset="1"/><line x1="1053.5" y1="110" x2="1053.5" y2="676" stroke-dashoffset="1"/></g><line x1="13" y1="562.5" x2="1317" y2="562.5" stroke="#c0c0c0" shape-rendering="crispEdges"/><line x1="13" y1="225.5" x2="1317" y2="225.5" stroke="#000" shape-rendering="crispEdges"/><line x1="13" y1="446.5" x2="1317" y2="446.5" stroke="#000" shape-rendering="crispEdges"/><line x1="13" y1="513.5" x2="1317" y2="513.5" stroke="#000" shape-rendering="crispEdges"/><line x1="13" y1="581.5" x2="1317" y2="581.5" stroke="#000" shape-rendering="crispEdges"/><line x1="13" y1="666.5" x2="1317" y2="666.5" stroke="#000" shape-rendering="crispEdges"/><line x1="13" y1="496.5" x2="342" y2="225.5" stroke="#ff0000" stroke-width="1" stroke-dasharray="3,4.8"/><g fill="#000" shape-rendering="crispEdges"><rect x="13" y="424" width="1" height="17"/><rect x="12" y="431" width="3" height="9"/><rect x="17" y="430" width="1" height="34"/><rect x="16" y="440" width="3" height="20"/><rect x="21" y="452" width="1" height="33"/><rect x="20" y="454" width="3" height="29"/><rect x="25" y="474" width="1" height="35"/><rect x="24" y="482" width="3" height="17"/><rect x="29" y="477" width="1" height="31"/><rect x="28" y="483" width="3" height="16"/><rect x="33" y="458" width="1" height="23"/><rect x="32" y="462" width="3" height="15"/><rect x="37" y="454" width="1" height="32"/><rect x="36" y="462" width="3" height="7"/><rect x="41" y="450" width="1" height="23"/><rect x="40" y="451" width="3" height="13"/><rect x="45" y="440" width="1" height="18"/><rect x="44" y="444" width="3" height="8"/><rect x="49" y="434" width="1" height="23"/><rect x="48" y="443" width="3" height="3"/><rect x="53" y="436" width="1" height="27"/><rect x="52" y="446" width="3" height="12"/><rect x="57" y="436" width="1" height="23"/><rect x="56" y="439" width="3" height="19"/><rect x="61" y="418" width="1" height="27"/><rect x="60" y="419" width="3" height="21"/><rect x="65" y="419" width="1" height="23"/><rect x="64" y="421" width="3" height="15"/><rect x="69" y="424" width="1" height="20"/><rect x="68" y="433" width="3" height="6"/><rect x="73" y="424" width="1" height="17"/><rect x="72" y="431" width="3" height="4"/><rect x="77" y="431" width="1" height="60"/><rect x="76" y="434" width="3" height="35"/><rect x="81" y="451" width="1" height="30"/><rect x="80" y="469" width="3" height="10"/><rect x="85" y="477" width="1" height="92"/><rect x="84" y="479" width="3" height="65"/><rect x="89" y="520" width="1" height="49"/><rect x="88" y="521" width="3" height="23"/><rect x="93" y="519" width="1" height="41"/><rect x="92" y="527" width="3" height="31"/><rect x="97" y="514" width="1" height="53"/><rect x="96" y="515" width="3" height="43"/><rect x="101" y="485" width="1" height="35"/><rect x="100" y="486" width="3" height="29"/><rect x="105" y="479" width="1" height="32"/><rect x="104" y="486" width="3" height="8"/><rect x="109" y="493" width="1" height="47"/><rect x="108" y="494" width="3" height="34"/><rect x="113" y="486" width="1" height="54"/><rect x="112" y="491" width="3" height="38"/><rect x="117" y="477" width="1" height="25"/><rect x="116" y="491" width="3" height="9"/><rect x="121" y="467" width="1" height="36"/><rect x="120" y="469" width="3" height="31"/><rect x="125" y="454" width="1" height="20"/><rect x="124" y="456" width="3" height="14"/><rect x="129" y="437" width="1" height="21"/><rect x="128" y="442" width="3" height="15"/><rect x="133" y="440" width="1" height="33"/><rect x="132" y="442" width="3" height="28"/><rect x="137" y="453" width="1" height="22"/><rect x="136" y="469" width="3" height="4"/><rect x="141" y="458" width="1" height="30"/><rect x="140" y="459" width="3" height="14"/><rect x="145" y="442" width="1" height="37"/><rect x="144" y="445" width="3" height="14"/><rect x="149" y="428" width="1" height="19"/><rect x="148" y="429" width="3" height="16"/><rect x="153" y="408" width="1" height="22"/><rect x="152" y="420" width="3" height="9"/><rect x="157" y="391" width="1" height="31"/><rect x="156" y="393" width="3" height="28"/><rect x="161" y="377" width="1" height="23"/><rect x="160" y="381" width="3" height="13"/><rect x="165" y="358" width="1" height="30"/><rect x="164" y="360" width="3" height="21"/><rect x="169" y="348" width="1" height="21"/><rect x="168" y="360" width="3" height="2"/><rect x="173" y="353" width="1" height="34"/><rect x="172" y="364" width="3" height="2"/><rect x="177" y="351" width="1" height="23"/><rect x="176" y="365" width="3" height="3"/><rect x="181" y="328" width="1" height="38"/><rect x="180" y="329" width="3" height="36"/><rect x="185" y="329" width="1" height="40"/><rect x="184" y="330" width="3" height="32"/><rect x="189" y="357" width="1" height="12"/><rect x="188" y="359" width="3" height="3"/><rect x="193" y="353" width="1" height="39"/><rect x="192" y="359" width="3" height="28"/><rect x="197" y="356" width="1" height="45"/><rect x="196" y="357" width="3" height="30"/><rect x="201" y="343" width="1" height="33"/><rect x="200" y="357" width="3" height="9"/><rect x="205" y="345" width="1" height="24"/><rect x="204" y="362" width="3" height="4"/><rect x="209" y="342" width="1" height="21"/><rect x="208" y="348" width="3" height="14"/><rect x="213" y="319" width="1" height="32"/><rect x="212" y="320" width="3" height="28"/><rect x="217" y="324" width="1" height="32"/><rect x="216" y="325" width="3" height="29"/><rect x="221" y="343" width="1" height="29"/><rect x="220" y="356" width="3" height="3"/><rect x="225" y="340" width="1" height="28"/><rect x="224" y="358" width="3" height="2"/><rect x="229" y="353" width="1" height="11"/><rect x="228" y="360" width="3" height="4"/><rect x="233" y="325" width="1" height="39"/><rect x="232" y="334" width="3" height="30"/><rect x="237" y="325" width="1" height="31"/><rect x="236" y="334" width="3" height="13"/><rect x="241" y="330" width="1" height="24"/><rect x="240" y="332" width="3" height="16"/><rect x="245" y="328" width="1" height="25"/><rect x="244" y="328" width="3" height="5"/><rect x="249" y="325" width="1" height="15"/><rect x="248" y="331" width="3" height="2"/><rect x="253" y="327" width="1" height="16"/><rect x="252" y="331" width="3" height="2"/><rect x="257" y="335" width="1" height="46"/><rect x="256" y="337" width="3" height="15"/><rect x="261" y="316" width="1" height="38"/><rect x="260" y="319" width="3" height="34"/><rect x="265" y="302" width="1" height="20"/><rect x="264" y="304" width="3" height="16"/><rect x="269" y="282" width="1" height="29"/><rect x="268" y="284" width="3" height="21"/><rect x="273" y="282" width="1" height="23"/><rect x="272" y="283" width="3" height="2"/><rect x="277" y="260" width="1" height="46"/><rect x="276" y="264" width="3" height="21"/><rect x="281" y="237" width="1" height="26"/><rect x="280" y="238" width="3" height="23"/><rect x="285" y="232" width="1" height="38"/><rect x="284" y="237" width="3" height="31"/><rect x="289" y="248" width="1" height="35"/><rect x="288" y="267" width="3" height="15"/><rect x="293" y="265" width="1" height="25"/><rect x="292" y="272" width="3" height="10"/><rect x="297" y="267" width="1" height="30"/><rect x="296" y="268" width="3" height="6"/><rect x="301" y="261" width="1" height="15"/><rect x="300" y="266" width="3" height="2"/><rect x="305" y="260" width="1" height="29"/><rect x="304" y="265" width="3" height="23"/><rect x="309" y="265" width="1" height="24"/><rect x="308" y="279" width="3" height="9"/><rect x="313" y="272" width="1" height="22"/><rect x="312" y="281" width="3" height="12"/><rect x="317" y="259" width="1" height="45"/><rect x="316" y="261" width="3" height="32"/><rect x="321" y="257" width="1" height="17"/><rect x="320" y="260" width="3" height="3"/><rect x="325" y="257" width="1" height="29"/><rect x="324" y="265" width="3" height="6"/><rect x="329" y="250" width="1" height="28"/><rect x="328" y="252" width="3" height="19"/><rect x="333" y="226" width="1" height="27"/><rect x="332" y="235" width="3" height="17"/><rect x="337" y="227" width="1" height="78"/><rect x="336" y="235" width="3" height="64"/><rect x="341" y="299" width="1" height="57"/><rect x="340" y="301" width="3" height="7"/><rect x="345" y="282" width="1" height="30"/><rect x="344" y="302" width="3" height="4"/><rect x="349" y="278" width="1" height="26"/><rect x="348" y="279" width="3" height="24"/><rect x="353" y="261" width="1" height="21"/><rect x="352" y="275" width="3" height="6"/><rect x="357" y="272" width="1" height="28"/><rect x="356" y="279" width="3" height="17"/><rect x="361" y="299" width="1" height="30"/><rect x="360" y="300" width="3" height="8"/><rect x="365" y="312" width="1" height="75"/><rect x="364" y="314" width="3" height="71"/><rect x="369" y="351" width="1" height="38"/><rect x="368" y="374" width="3" height="14"/><rect x="373" y="362" width="1" height="55"/><rect x="372" y="375" width="3" height="11"/><rect x="377" y="308" width="1" height="69"/><rect x="376" y="310" width="3" height="66"/><rect x="381" y="304" width="1" height="22"/><rect x="380" y="305" width="3" height="6"/><rect x="385" y="263" width="1" height="44"/><rect x="384" y="268" width="3" height="37"/><rect x="389" y="266" width="1" height="60"/><rect x="388" y="267" width="3" height="44"/><rect x="393" y="299" width="1" height="44"/><rect x="392" y="301" width="3" height="14"/><rect x="397" y="314" width="1" height="38"/><rect x="396" y="315" width="3" height="33"/><rect x="401" y="347" width="1" height="41"/><rect x="400" y="348" width="3" height="33"/><rect x="405" y="321" width="1" height="51"/><rect x="404" y="324" width="3" height="46"/><rect x="409" y="305" width="1" height="36"/><rect x="408" y="323" width="3" height="4"/><rect x="413" y="325" width="1" height="40"/><rect x="412" y="326" width="3" height="24"/><rect x="417" y="324" width="1" height="38"/><rect x="416" y="333" width="3" height="19"/><rect x="421" y="317" width="1" height="27"/><rect x="420" y="324" width="3" height="2"/><rect x="425" y="302" width="1" height="30"/><rect x="424" y="323" width="3" height="3"/><rect x="429" y="308" width="1" height="24"/><rect x="428" y="312" width="3" height="12"/><rect x="433" y="292" width="1" height="24"/><rect x="432" y="293" width="3" height="22"/><rect x="437" y="270" width="1" height="29"/><rect x="436" y="272" width="3" height="21"/><rect x="441" y="257" width="1" height="31"/><rect x="440" y="259" width="3" height="15"/><rect x="445" y="252" width="1" height="20"/><rect x="444" y="260" width="3" height="11"/><rect x="449" y="257" width="1" height="19"/><rect x="448" y="265" width="3" height="3"/><rect x="453" y="258" width="1" height="23"/><rect x="452" y="259" width="3" height="10"/><rect x="457" y="252" width="1" height="28"/><rect x="456" y="265" width="3" height="2"/><rect x="461" y="264" width="1" height="28"/><rect x="460" y="265" width="3" height="18"/><rect x="465" y="277" width="1" height="25"/><rect x="464" y="279" width="3" height="4"/><rect x="469" y="275" width="1" height="36"/><rect x="468" y="280" width="3" height="14"/><rect x="473" y="283" width="1" height="31"/><rect x="472" y="298" width="3" height="11"/><rect x="477" y="299" width="1" height="22"/><rect x="476" y="305" width="3" height="9"/><rect x="481" y="304" width="1" height="12"/><rect x="480" y="305" width="3" height="10"/><rect x="485" y="299" width="1" height="16"/><rect x="484" y="305" width="3" height="3"/><rect x="489" y="293" width="1" height="24"/><rect x="488" y="295" width="3" height="11"/><rect x="493" y="293" width="1" height="38"/><rect x="492" y="295" width="3" height="34"/><rect x="497" y="323" width="1" height="26"/><rect x="496" y="331" width="3" height="15"/><rect x="501" y="344" width="1" height="28"/><rect x="500" y="346" width="3" height="22"/><rect x="505" y="355" width="1" height="29"/><rect x="504" y="366" width="3" height="10"/><rect x="509" y="360" width="1" height="35"/><rect x="508" y="370" width="3" height="14"/><rect x="513" y="349" width="1" height="35"/><rect x="512" y="358" width="3" height="25"/><rect x="517" y="338" width="1" height="28"/><rect x="516" y="339" width="3" height="11"/><rect x="521" y="322" width="1" height="22"/><rect x="520" y="333" width="3" height="10"/><rect x="525" y="318" width="1" height="34"/><rect x="524" y="321" width="3" height="17"/><rect x="529" y="310" width="1" height="21"/><rect x="528" y="318" width="3" height="7"/><rect x="533" y="316" width="1" height="21"/><rect x="532" y="323" width="3" height="5"/><rect x="537" y="298" width="1" height="29"/><rect x="536" y="305" width="3" height="18"/><rect x="541" y="292" width="1" height="37"/><rect x="540" y="293" width="3" height="15"/><rect x="545" y="282" width="1" height="17"/><rect x="544" y="283" width="3" height="12"/><rect x="549" y="279" width="1" height="15"/><rect x="548" y="281" width="3" height="2"/><rect x="553" y="282" width="1" height="21"/><rect x="552" y="283" width="3" height="19"/><rect x="557" y="286" width="1" height="19"/><rect x="556" y="300" width="3" height="2"/><rect x="561" y="299" width="1" height="18"/><rect x="560" y="300" width="3" height="10"/><rect x="565" y="303" width="1" height="26"/><rect x="564" y="306" width="3" height="5"/><rect x="569" y="277" width="1" height="31"/><rect x="568" y="285" width="3" height="21"/><rect x="573" y="282" width="1" height="26"/><rect x="572" y="285" width="3" height="13"/><rect x="577" y="294" width="1" height="13"/><rect x="576" y="295" width="3" height="9"/><rect x="581" y="302" width="1" height="29"/><rect x="580" y="305" width="3" height="23"/><rect x="585" y="314" width="1" height="16"/><rect x="584" y="322" width="3" height="7"/><rect x="589" y="301" width="1" height="29"/><rect x="588" y="311" width="3" height="9"/><rect x="593" y="302" width="1" height="21"/><rect x="592" y="305" width="3" height="7"/><rect x="597" y="300" width="1" height="12"/><rect x="596" y="308" width="3" height="2"/><rect x="601" y="293" width="1" height="17"/><rect x="600" y="304" width="3" height="4"/><rect x="605" y="296" width="1" height="20"/><rect x="604" y="303" width="3" height="4"/><rect x="609" y="294" width="1" height="12"/><rect x="608" y="296" width="3" height="9"/><rect x="613" y="293" width="1" height="12"/><rect x="612" y="296" width="3" height="3"/><rect x="617" y="289" width="1" height="12"/><rect x="616" y="291" width="3" height="8"/><rect x="621" y="281" width="1" height="14"/><rect x="620" y="283" width="3" height="11"/><rect x="625" y="282" width="1" height="18"/><rect x="624" y="283" width="3" height="16"/><rect x="629" y="297" width="1" height="13"/><rect x="628" y="300" width="3" height="6"/><rect x="633" y="287" width="1" height="19"/><rect x="632" y="293" width="3" height="8"/><rect x="637" y="281" width="1" height="16"/><rect x="636" y="287" width="3" height="4"/><rect x="641" y="282" width="1" height="14"/><rect x="640" y="288" width="3" height="2"/><rect x="645" y="282" width="1" height="20"/><rect x="644" y="294" width="3" height="5"/><rect x="649" y="294" width="1" height="13"/><rect x="648" y="296" width="3" height="8"/><rect x="653" y="295" width="1" height="25"/><rect x="652" y="302" width="3" height="10"/><rect x="657" y="301" width="1" height="21"/><rect x="656" y="310" width="3" height="2"/><rect x="661" y="305" width="1" height="13"/><rect x="660" y="311" width="3" height="5"/><rect x="665" y="312" width="1" height="16"/><rect x="664" y="314" width="3" height="11"/><rect x="669" y="312" width="1" height="23"/><rect x="668" y="320" width="3" height="5"/><rect x="673" y="300" width="1" height="27"/><rect x="672" y="301" width="3" height="23"/><rect x="677" y="295" width="1" height="13"/><rect x="676" y="296" width="3" height="11"/><rect x="681" y="290" width="1" height="17"/><rect x="680" y="296" width="3" height="4"/><rect x="685" y="288" width="1" height="20"/><rect x="684" y="302" width="3" height="2"/><rect x="689" y="283" width="1" height="22"/><rect x="688" y="289" width="3" height="15"/><rect x="693" y="288" width="1" height="31"/><rect x="692" y="290" width="3" height="28"/><rect x="697" y="305" width="1" height="18"/><rect x="696" y="316" width="3" height="2"/><rect x="701" y="305" width="1" height="19"/><rect x="700" y="307" width="3" height="11"/><rect x="705" y="313" width="1" height="40"/><rect x="704" y="314" width="3" height="32"/><rect x="709" y="345" width="1" height="37"/><rect x="708" y="346" width="3" height="34"/><rect x="713" y="366" width="1" height="28"/><rect x="712" y="376" width="3" height="12"/><rect x="717" y="384" width="1" height="19"/><rect x="716" y="389" width="3" height="8"/><rect x="721" y="376" width="1" height="38"/><rect x="720" y="393" width="3" height="12"/><rect x="725" y="390" width="1" height="36"/><rect x="724" y="397" width="3" height="19"/><rect x="729" y="396" width="1" height="47"/><rect x="728" y="403" width="3" height="34"/><rect x="733" y="422" width="1" height="28"/><rect x="732" y="436" width="3" height="11"/><rect x="737" y="433" width="1" height="26"/><rect x="736" y="447" width="3" height="7"/><rect x="741" y="437" width="1" height="25"/><rect x="740" y="453" width="3" height="3"/><rect x="745" y="427" width="1" height="32"/><rect x="744" y="442" width="3" height="11"/><rect x="749" y="427" width="1" height="20"/><rect x="748" y="433" width="3" height="9"/><rect x="753" y="430" width="1" height="48"/><rect x="752" y="434" width="3" height="40"/><rect x="757" y="439" width="1" height="40"/><rect x="756" y="441" width="3" height="32"/><rect x="761" y="439" width="1" height="25"/><rect x="760" y="441" width="3" height="2"/><rect x="765" y="436" width="1" height="34"/><rect x="764" y="443" width="3" height="16"/><rect x="769" y="451" width="1" height="25"/><rect x="768" y="459" width="3" height="14"/><rect x="773" y="437" width="1" height="35"/><rect x="772" y="447" width="3" height="24"/><rect x="777" y="426" width="1" height="16"/><rect x="776" y="436" width="3" height="5"/><rect x="781" y="403" width="1" height="28"/><rect x="780" y="418" width="3" height="10"/><rect x="785" y="410" width="1" height="18"/><rect x="784" y="424" width="3" height="2"/><rect x="789" y="412" width="1" height="18"/><rect x="788" y="414" width="3" height="12"/><rect x="793" y="407" width="1" height="15"/><rect x="792" y="409" width="3" height="5"/><rect x="797" y="385" width="1" height="29"/><rect x="796" y="386" width="3" height="27"/><rect x="801" y="378" width="1" height="20"/><rect x="800" y="386" width="3" height="11"/><rect x="805" y="391" width="1" height="23"/><rect x="804" y="396" width="3" height="16"/><rect x="809" y="397" width="1" height="25"/><rect x="808" y="410" width="3" height="6"/><rect x="813" y="413" width="1" height="20"/><rect x="812" y="418" width="3" height="3"/><rect x="817" y="412" width="1" height="33"/><rect x="816" y="420" width="3" height="23"/><rect x="821" y="439" width="1" height="17"/><rect x="820" y="443" width="3" height="7"/><rect x="825" y="442" width="1" height="22"/><rect x="824" y="448" width="3" height="3"/><rect x="829" y="447" width="1" height="26"/><rect x="828" y="448" width="3" height="18"/><rect x="833" y="466" width="1" height="18"/><rect x="832" y="467" width="3" height="5"/><rect x="837" y="467" width="1" height="12"/><rect x="836" y="471" width="3" height="7"/><rect x="841" y="462" width="1" height="20"/><rect x="840" y="468" width="3" height="11"/><rect x="845" y="455" width="1" height="25"/><rect x="844" y="464" width="3" height="3"/><rect x="849" y="453" width="1" height="37"/><rect x="848" y="462" width="3" height="26"/><rect x="853" y="474" width="1" height="26"/><rect x="852" y="488" width="3" height="9"/><rect x="857" y="482" width="1" height="15"/><rect x="856" y="491" width="3" height="5"/><rect x="861" y="462" width="1" height="29"/><rect x="860" y="467" width="3" height="23"/><rect x="865" y="455" width="1" height="15"/><rect x="864" y="459" width="3" height="8"/><rect x="869" y="454" width="1" height="16"/><rect x="868" y="456" width="3" height="10"/><rect x="873" y="456" width="1" height="17"/><rect x="872" y="464" width="3" height="8"/><rect x="877" y="447" width="1" height="28"/><rect x="876" y="454" width="3" height="20"/><rect x="881" y="450" width="1" height="22"/><rect x="880" y="458" width="3" height="5"/><rect x="885" y="447" width="1" height="20"/><rect x="884" y="452" width="3" height="8"/><rect x="889" y="429" width="1" height="25"/><rect x="888" y="435" width="3" height="17"/><rect x="893" y="427" width="1" height="13"/><rect x="892" y="429" width="3" height="7"/><rect x="897" y="410" width="1" height="23"/><rect x="896" y="417" width="3" height="14"/><rect x="901" y="414" width="1" height="13"/><rect x="900" y="418" width="3" height="8"/><rect x="905" y="419" width="1" height="14"/><rect x="904" y="423" width="3" height="9"/><rect x="909" y="426" width="1" height="11"/><rect x="908" y="431" width="3" height="2"/><rect x="913" y="417" width="1" height="15"/><rect x="912" y="421" width="3" height="10"/><rect x="917" y="417" width="1" height="9"/><rect x="916" y="421" width="3" height="1"/><rect x="921" y="419" width="1" height="19"/><rect x="920" y="420" width="3" height="17"/><rect x="925" y="427" width="1" height="10"/><rect x="924" y="428" width="3" height="8"/><rect x="929" y="422" width="1" height="14"/><rect x="928" y="424" width="3" height="4"/><rect x="933" y="412" width="1" height="15"/><rect x="932" y="417" width="3" height="9"/><rect x="937" y="415" width="1" height="9"/><rect x="936" y="419" width="3" height="2"/><rect x="941" y="409" width="1" height="14"/><rect x="940" y="414" width="3" height="8"/><rect x="945" y="405" width="1" height="21"/><rect x="944" y="413" width="3" height="8"/><rect x="949" y="414" width="1" height="9"/><rect x="948" y="419" width="3" height="2"/><rect x="953" y="417" width="1" height="10"/><rect x="952" y="420" width="3" height="1"/><rect x="957" y="408" width="1" height="19"/><rect x="956" y="417" width="3" height="5"/><rect x="961" y="415" width="1" height="13"/><rect x="960" y="417" width="3" height="10"/><rect x="965" y="422" width="1" height="14"/><rect x="964" y="425" width="3" height="7"/><rect x="969" y="424" width="1" height="11"/><rect x="968" y="426" width="3" height="6"/><rect x="973" y="422" width="1" height="14"/><rect x="972" y="426" width="3" height="2"/><rect x="977" y="421" width="1" height="11"/><rect x="976" y="424" width="3" height="2"/><rect x="981" y="417" width="1" height="15"/><rect x="980" y="421" width="3" height="5"/><rect x="985" y="419" width="1" height="45"/><rect x="984" y="421" width="3" height="42"/><rect x="989" y="450" width="1" height="22"/><rect x="988" y="461" width="3" height="9"/><rect x="993" y="468" width="1" height="27"/><rect x="992" y="469" width="3" height="24"/><rect x="997" y="482" width="1" height="22"/><rect x="996" y="492" width="3" height="10"/><rect x="1001" y="474" width="1" height="28"/><rect x="1000" y="498" width="3" height="3"/><rect x="1005" y="477" width="1" height="24"/><rect x="1004" y="490" width="3" height="10"/><rect x="1009" y="481" width="1" height="14"/><rect x="1008" y="484" width="3" height="7"/><rect x="1013" y="473" width="1" height="20"/><rect x="1012" y="485" width="3" height="7"/><rect x="1017" y="489" width="1" height="27"/><rect x="1016" y="491" width="3" height="13"/><rect x="1021" y="489" width="1" height="21"/><rect x="1020" y="491" width="3" height="13"/><rect x="1025" y="488" width="1" height="24"/><rect x="1024" y="491" width="3" height="9"/><rect x="1029" y="497" width="1" height="31"/><rect x="1028" y="498" width="3" height="29"/><rect x="1033" y="515" width="1" height="28"/><rect x="1032" y="525" width="3" height="17"/><rect x="1037" y="534" width="1" height="21"/><rect x="1036" y="541" width="3" height="12"/><rect x="1041" y="546" width="1" height="19"/><rect x="1040" y="553" width="3" height="8"/><rect x="1045" y="557" width="1" height="10"/><rect x="1044" y="560" width="3" height="3"/></g><g fill="#ff0000" shape-rendering="crispEdges"><rect x="29" y="484" width="1" height="14"/><rect x="33" y="463" width="1" height="13"/><rect x="41" y="452" width="1" height="11"/><rect x="45" y="445" width="1" height="6"/><rect x="57" y="440" width="1" height="17"/><rect x="61" y="420" width="1" height="19"/><rect x="69" y="434" width="1" height="4"/><rect x="89" y="522" width="1" height="21"/><rect x="97" y="516" width="1" height="41"/><rect x="101" y="487" width="1" height="27"/><rect x="113" y="492" width="1" height="36"/><rect x="121" y="470" width="1" height="29"/><rect x="125" y="457" width="1" height="12"/><rect x="129" y="443" width="1" height="13"/><rect x="141" y="460" width="1" height="12"/><rect x="145" y="446" width="1" height="12"/><rect x="149" y="430" width="1" height="14"/><rect x="153" y="421" width="1" height="7"/><rect x="157" y="394" width="1" height="26"/><rect x="161" y="382" width="1" height="11"/><rect x="165" y="361" width="1" height="19"/><rect x="181" y="330" width="1" height="34"/><rect x="189" y="360" width="1" height="1"/><rect x="197" y="358" width="1" height="28"/><rect x="205" y="363" width="1" height="2"/><rect x="209" y="349" width="1" height="12"/><rect x="213" y="321" width="1" height="26"/><rect x="233" y="335" width="1" height="28"/><rect x="241" y="333" width="1" height="14"/><rect x="245" y="329" width="1" height="3"/><rect x="261" y="320" width="1" height="32"/><rect x="265" y="305" width="1" height="14"/><rect x="269" y="285" width="1" height="19"/><rect x="277" y="265" width="1" height="19"/><rect x="281" y="239" width="1" height="21"/><rect x="293" y="273" width="1" height="8"/><rect x="297" y="269" width="1" height="4"/><rect x="309" y="280" width="1" height="7"/><rect x="317" y="262" width="1" height="30"/><rect x="329" y="253" width="1" height="17"/><rect x="333" y="236" width="1" height="15"/><rect x="345" y="303" width="1" height="2"/><rect x="349" y="280" width="1" height="22"/><rect x="353" y="276" width="1" height="4"/><rect x="373" y="376" width="1" height="9"/><rect x="377" y="311" width="1" height="64"/><rect x="381" y="306" width="1" height="4"/><rect x="385" y="269" width="1" height="35"/><rect x="405" y="325" width="1" height="44"/><rect x="417" y="334" width="1" height="17"/><rect x="425" y="324" width="1" height="1"/><rect x="429" y="313" width="1" height="10"/><rect x="433" y="294" width="1" height="20"/><rect x="437" y="273" width="1" height="19"/><rect x="441" y="260" width="1" height="13"/><rect x="481" y="306" width="1" height="8"/><rect x="485" y="306" width="1" height="1"/><rect x="489" y="296" width="1" height="9"/><rect x="513" y="359" width="1" height="23"/><rect x="517" y="340" width="1" height="9"/><rect x="525" y="322" width="1" height="15"/><rect x="533" y="324" width="1" height="3"/><rect x="537" y="306" width="1" height="16"/><rect x="541" y="294" width="1" height="13"/><rect x="545" y="284" width="1" height="10"/><rect x="569" y="286" width="1" height="19"/><rect x="585" y="323" width="1" height="5"/><rect x="589" y="312" width="1" height="7"/><rect x="593" y="306" width="1" height="5"/><rect x="601" y="305" width="1" height="2"/><rect x="605" y="304" width="1" height="2"/><rect x="609" y="297" width="1" height="7"/><rect x="617" y="292" width="1" height="6"/><rect x="621" y="284" width="1" height="9"/><rect x="633" y="294" width="1" height="6"/><rect x="637" y="288" width="1" height="2"/><rect x="661" y="312" width="1" height="3"/><rect x="669" y="321" width="1" height="3"/><rect x="673" y="302" width="1" height="21"/><rect x="677" y="297" width="1" height="9"/><rect x="689" y="290" width="1" height="13"/><rect x="725" y="398" width="1" height="17"/><rect x="745" y="443" width="1" height="9"/><rect x="749" y="434" width="1" height="7"/><rect x="757" y="442" width="1" height="30"/><rect x="773" y="448" width="1" height="22"/><rect x="777" y="437" width="1" height="3"/><rect x="781" y="419" width="1" height="8"/><rect x="789" y="415" width="1" height="10"/><rect x="793" y="410" width="1" height="3"/><rect x="797" y="387" width="1" height="25"/><rect x="841" y="469" width="1" height="9"/><rect x="845" y="465" width="1" height="1"/><rect x="857" y="492" width="1" height="3"/><rect x="861" y="468" width="1" height="21"/><rect x="865" y="460" width="1" height="6"/><rect x="877" y="455" width="1" height="18"/><rect x="885" y="453" width="1" height="6"/><rect x="889" y="436" width="1" height="15"/><rect x="893" y="430" width="1" height="5"/><rect x="897" y="418" width="1" height="12"/><rect x="913" y="422" width="1" height="8"/><rect x="925" y="429" width="1" height="6"/><rect x="929" y="425" width="1" height="2"/><rect x="933" y="418" width="1" height="7"/><rect x="941" y="415" width="1" height="6"/><rect x="965" y="426" width="1" height="5"/><rect x="969" y="427" width="1" height="4"/><rect x="981" y="422" width="1" height="3"/><rect x="1005" y="491" width="1" height="8"/><rect x="1009" y="485" width="1" height="5"/><rect x="1021" y="492" width="1" height="11"/></g><g fill="#0000ff" shape-rendering="crispEdges"><rect x="13" y="432" width="1" height="7"/><rect x="17" y="441" width="1" height="18"/><rect x="21" y="455" width="1" height="27"/><rect x="25" y="483" width="1" height="15"/><rect x="37" y="463" width="1" height="5"/><rect x="49" y="444" width="1" height="1"/><rect x="53" y="447" width="1" height="10"/><rect x="65" y="422" width="1" height="13"/><rect x="73" y="432" width="1" height="2"/><rect x="77" y="435" width="1" height="33"/><rect x="81" y="470" width="1" height="8"/><rect x="85" y="480" width="1" height="63"/><rect x="93" y="528" width="1" height="29"/><rect x="105" y="487" width="1" height="6"/><rect x="109" y="495" width="1" height="32"/><rect x="117" y="492" width="1" height="7"/><rect x="133" y="443" width="1" height="26"/><rect x="137" y="470" width="1" height="2"/><rect x="177" y="366" width="1" height="1"/><rect x="185" y="331" width="1" height="30"/><rect x="193" y="360" width="1" height="26"/><rect x="201" y="358" width="1" height="7"/><rect x="217" y="326" width="1" height="27"/><rect x="221" y="357" width="1" height="1"/><rect x="229" y="361" width="1" height="2"/><rect x="237" y="335" width="1" height="11"/><rect x="257" y="338" width="1" height="13"/><rect x="285" y="238" width="1" height="29"/><rect x="289" y="268" width="1" height="13"/><rect x="305" y="266" width="1" height="21"/><rect x="313" y="282" width="1" height="10"/><rect x="321" y="261" width="1" height="1"/><rect x="325" y="266" width="1" height="4"/><rect x="337" y="236" width="1" height="62"/><rect x="341" y="302" width="1" height="5"/><rect x="357" y="280" width="1" height="15"/><rect x="361" y="301" width="1" height="6"/><rect x="365" y="315" width="1" height="69"/><rect x="369" y="375" width="1" height="12"/><rect x="389" y="268" width="1" height="42"/><rect x="393" y="302" width="1" height="12"/><rect x="397" y="316" width="1" height="31"/><rect x="401" y="349" width="1" height="31"/><rect x="409" y="324" width="1" height="2"/><rect x="413" y="327" width="1" height="22"/><rect x="445" y="261" width="1" height="9"/><rect x="449" y="266" width="1" height="1"/><rect x="453" y="260" width="1" height="8"/><rect x="461" y="266" width="1" height="16"/><rect x="465" y="280" width="1" height="2"/><rect x="469" y="281" width="1" height="12"/><rect x="473" y="299" width="1" height="9"/><rect x="477" y="306" width="1" height="7"/><rect x="493" y="296" width="1" height="32"/><rect x="497" y="332" width="1" height="13"/><rect x="501" y="347" width="1" height="20"/><rect x="505" y="367" width="1" height="8"/><rect x="509" y="371" width="1" height="12"/><rect x="521" y="334" width="1" height="8"/><rect x="529" y="319" width="1" height="5"/><rect x="553" y="284" width="1" height="17"/><rect x="561" y="301" width="1" height="8"/><rect x="565" y="307" width="1" height="3"/><rect x="573" y="286" width="1" height="11"/><rect x="577" y="296" width="1" height="7"/><rect x="581" y="306" width="1" height="21"/><rect x="613" y="297" width="1" height="1"/><rect x="625" y="284" width="1" height="14"/><rect x="629" y="301" width="1" height="4"/><rect x="645" y="295" width="1" height="3"/><rect x="649" y="297" width="1" height="6"/><rect x="653" y="303" width="1" height="8"/><rect x="665" y="315" width="1" height="9"/><rect x="681" y="297" width="1" height="2"/><rect x="693" y="291" width="1" height="26"/><rect x="701" y="308" width="1" height="9"/><rect x="705" y="315" width="1" height="30"/><rect x="709" y="347" width="1" height="32"/><rect x="713" y="377" width="1" height="10"/><rect x="717" y="390" width="1" height="6"/><rect x="721" y="394" width="1" height="10"/><rect x="729" y="404" width="1" height="32"/><rect x="733" y="437" width="1" height="9"/><rect x="737" y="448" width="1" height="5"/><rect x="741" y="454" width="1" height="1"/><rect x="753" y="435" width="1" height="38"/><rect x="765" y="444" width="1" height="14"/><rect x="769" y="460" width="1" height="12"/><rect x="801" y="387" width="1" height="9"/><rect x="805" y="397" width="1" height="14"/><rect x="809" y="411" width="1" height="4"/><rect x="813" y="419" width="1" height="1"/><rect x="817" y="421" width="1" height="21"/><rect x="821" y="444" width="1" height="5"/><rect x="825" y="449" width="1" height="1"/><rect x="829" y="449" width="1" height="16"/><rect x="833" y="468" width="1" height="3"/><rect x="837" y="472" width="1" height="5"/><rect x="849" y="463" width="1" height="24"/><rect x="853" y="489" width="1" height="7"/><rect x="869" y="457" width="1" height="8"/><rect x="873" y="465" width="1" height="6"/><rect x="881" y="459" width="1" height="3"/><rect x="901" y="419" width="1" height="6"/><rect x="905" y="424" width="1" height="7"/><rect x="921" y="421" width="1" height="15"/><rect x="945" y="414" width="1" height="6"/><rect x="957" y="418" width="1" height="3"/><rect x="961" y="418" width="1" height="8"/><rect x="985" y="422" width="1" height="40"/><rect x="989" y="462" width="1" height="7"/><rect x="993" y="470" width="1" height="22"/><rect x="997" y="493" width="1" height="8"/><rect x="1001" y="499" width="1" height="1"/><rect x="1013" y="486" width="1" height="5"/><rect x="1017" y="492" width="1" height="11"/><rect x="1025" y="492" width="1" height="7"/><rect x="1029" y="499" width="1" height="27"/><rect x="1033" y="526" width="1" height="15"/><rect x="1037" y="542" width="1" height="10"/><rect x="1041" y="554" width="1" height="6"/><rect x="1045" y="561" width="1" height="1"/></g><polyline fill="none" stroke="#8b4513" stroke-width="2" stroke-linejoin="round" shape-rendering="crispEdges" points="12.4,482.0 25.0,510.8 61.3,418.0 88.6,569.3 213.4,319.3 257.6,381.6 333.8,225.5 373.0,417.9 457.3,250.7 509.3,398.2 569.3,278.0 585.2,330.9 637.4,280.6 669.3,335.0 689.1,283.0 757.3,480.0 801.3,376.4 853.6,501.0 945.6,405.7 1044.9,566.0"/><polyline fill="none" stroke="#ff0000" stroke-width="2" stroke-linejoin="round" shape-rendering="crispEdges" points="12.9,468.9 19.7,469.6 24.5,472.1 31.8,472.6 39.0,470.6 43.9,466.5 49.9,464.1 54.7,462.9 59.6,458.0 65.6,454.4 71.7,451.5 76.5,451.3 80.1,454.4 85.0,464.1 89.8,475.0 94.6,482.2 98.3,484.2 103.1,484.6 106.7,487.5 111.6,490.0 117.6,490.7 121.2,489.5 126.1,482.2 130.9,479.3 135.8,478.6 141.8,476.2 146.6,471.3 150.3,466.5 164.5,439.9 174.2,422.0 181.4,408.7 188.7,399.1 192.3,398.3 197.2,393.0 203.2,389.4 209.3,382.1 214.1,376.6 220.1,373.7 227.4,371.7 233.4,367.6 239.5,362.8 245.5,357.9 251.6,354.3 257.6,352.4 262.5,349.5 268.5,341.0 274.5,330.1 280.6,318.0 285.4,310.8 291.5,305.9 297.5,299.9 301.3,297.2 303.6,296.3 308.2,295.0 314.4,292.6 322.0,287.5 327.5,284.8 333.0,277.9 338.5,279.2 344.0,283.9 349.6,283.9 355.1,283.4 360.6,287.5 366.1,298.5 370.2,308.2 374.4,313.1 381.2,312.3 386.8,308.2 393.6,309.0 399.2,316.4 403.3,319.2 410.2,320.6 414.3,323.3 424.7,324.5 430.7,320.9 436.8,312.4 444.0,303.9 451.3,298.4 458.5,293.5 465.8,292.3 473.0,294.3 480.3,297.9 487.6,298.4 492.4,300.3 498.4,306.3 504.5,317.2 510.5,326.4 516.6,330.5 523.8,331.0 531.1,328.8 537.1,325.7 543.2,319.6 549.2,314.3 555.3,312.4 562.5,311.9 568.6,308.8 574.6,307.1 582.3,310.1 589.5,310.8 599.2,309.6 606.4,308.4 613.7,306.4 620.9,303.5 627.0,303.5 634.3,301.1 640.3,298.7 645.1,298.7 651.2,301.1 658.4,302.3 664.5,304.7 670.5,307.2 676.6,306.4 683.8,304.7 691.1,303.5 698.3,305.9 703.2,308.4 706.8,312.0 711.6,321.7 716.5,331.3 721.3,339.8 724.7,345.0 729.5,357.1 734.3,369.2 739.2,380.1 745.2,389.7 751.3,399.4 757.3,406.7 763.4,413.9 769.4,421.2 774.3,424.8 780.3,424.3 787.6,423.6 792.4,422.9 798.4,416.3 804.5,414.6 810.5,415.1 816.6,418.8 822.6,423.6 828.7,428.4 834.7,435.7 840.8,441.7 846.8,445.4 852.8,452.6 857.7,458.2 863.7,458.2 869.8,458.7 876.4,460.9 882.8,460.1 887.9,457.6 894.3,451.2 900.6,447.3 908.3,444.8 916.0,439.7 923.6,438.4 931.3,434.6 938.9,432.0 946.6,429.5 954.3,426.9 960.7,426.9 968.3,427.7 974.7,427.7 981.1,427.7 986.2,432.0 991.3,438.4 996.4,446.1 1001.5,452.5 1007.9,457.6 1014.3,462.7 1020.7,467.8 1025.8,471.6 1030.9,479.3 1036.0,489.5 1041.1,498.4 1045.4,506.6"/><polyline fill="none" stroke="#0000ff" stroke-width="2" stroke-linejoin="round" shape-rendering="crispEdges" points="12.9,452.0 17.3,458.0 21.4,465.3 25.0,470.1 29.3,471.3 34.2,470.1 39.0,466.5 43.9,460.5 48.7,457.6 54.7,455.6 58.4,450.8 62.0,445.9 66.8,443.5 70.5,441.1 74.1,442.3 77.7,448.4 81.3,454.4 85.0,472.6 88.6,487.1 92.2,499.2 95.9,503.5 99.5,502.8 103.1,499.2 106.7,502.8 110.4,505.9 114.0,502.8 117.6,501.6 121.2,496.7 124.9,484.6 128.5,477.4 133.3,476.2 138.2,472.6 141.8,470.1 145.4,464.1 149.1,458.0 154.8,439.9 160.9,417.2 165.7,403.9 173.0,391.8 177.8,383.3 181.0,373.7 186.3,370.8 189.9,368.8 193.5,371.2 198.4,369.3 204.4,367.6 209.3,361.6 213.4,354.3 217.7,354.3 222.6,356.7 228.6,357.9 233.4,353.1 238.3,349.5 243.1,344.6 247.9,341.0 252.8,339.8 257.6,341.0 261.2,337.4 266.1,327.7 270.9,315.6 275.8,304.7 280.6,289.0 285.4,283.7 290.3,283.0 295.1,279.3 301.1,275.7 306.0,278.1 310.8,280.6 315.7,279.3 322.0,273.7 327.5,271.0 333.0,262.7 337.2,269.6 341.3,279.2 346.8,284.8 353.7,283.9 359.2,287.5 363.3,297.2 366.1,310.9 368.8,323.3 373.0,337.1 377.1,333.0 381.2,326.1 385.4,312.3 392.3,312.3 396.4,316.4 400.5,331.6 407.4,331.6 412.9,331.6 418.4,333.0 422.3,330.5 428.3,326.9 433.1,316.0 438.0,302.7 444.0,290.6 451.3,283.4 457.3,279.0 463.4,279.7 468.2,283.4 474.3,290.6 480.3,296.7 485.1,297.9 490.0,298.4 493.6,305.1 498.4,319.6 503.3,334.2 508.1,345.0 512.9,348.7 517.8,347.5 522.6,343.8 527.5,339.0 532.3,335.4 537.1,328.1 542.0,319.6 546.8,310.0 550.4,305.1 555.3,305.1 560.1,305.6 564.9,305.1 569.8,301.5 574.6,300.8 578.6,305.9 583.5,309.6 589.5,310.3 596.8,309.6 604.0,308.4 611.3,304.7 617.3,301.1 623.4,297.5 629.4,299.9 634.3,298.7 639.1,296.3 645.1,296.8 650.0,299.9 654.8,302.3 660.9,305.9 665.7,309.6 670.5,311.3 675.4,308.4 680.2,304.7 686.2,304.0 692.3,304.0 697.1,307.2 702.0,310.8 705.6,315.6 708.0,327.7 711.6,339.8 715.0,349.8 719.8,363.1 725.9,378.9 730.7,393.4 735.6,407.9 740.4,420.0 745.2,428.4 750.1,429.6 753.7,436.9 759.7,438.1 764.6,442.9 768.2,450.2 774.3,446.6 779.1,441.7 783.9,435.7 788.8,430.9 793.6,422.4 798.4,416.3 803.3,412.7 808.1,414.6 814.2,416.3 819.0,422.4 823.8,429.6 828.7,438.1 833.5,447.8 838.3,455.0 843.2,458.7 848.0,462.3 852.8,470.8 857.7,476.8 862.5,474.4 867.4,470.8 870.0,469.8 875.1,469.6 880.2,466.5 885.3,462.7 890.4,456.3 895.5,447.3 900.6,439.7 905.8,437.1 910.9,437.1 916.0,433.3 921.1,430.8 926.2,428.2 932.6,425.1 938.9,422.6 945.3,421.3 951.7,420.5 958.1,420.0 963.2,423.1 968.3,425.6 974.7,426.2 981.1,426.2 984.9,430.8 988.7,439.7 992.6,449.9 996.4,461.4 1000.2,469.1 1005.3,474.2 1010.4,478.0 1015.6,483.1 1020.7,486.4 1025.8,489.5 1029.6,497.1 1033.4,507.4 1037.3,517.6 1041.1,526.5 1045.4,535.4"/><g fill="#000" shape-rendering="crispEdges"><rect x="12" y="109" width="1" height="567"/><rect x="12" y="109" width="1305" height="1"/><rect x="1316" y="109" width="1" height="567"/><rect x="12" y="675" width="1305" height="1"/></g><g fill="#000" shape-rendering="crispEdges"><rect x="1317" y="111" width="2" height="1"/><rect x="1317" y="144" width="2" height="1"/><rect x="1317" y="177" width="2" height="1"/><rect x="1317" y="210" width="2" height="1"/><rect x="1317" y="243" width="2" height="1"/><rect x="1317" y="276" width="2" height="1"/><rect x="1317" y="309" width="2" height="1"/><rect x="1317" y="342" width="2" height="1"/><rect x="1317" y="375" width="2" height="1"/><rect x="1317" y="408" width="2" height="1"/><rect x="1317" y="441" width="2" height="1"/><rect x="1317" y="474" width="2" height="1"/><rect x="1317" y="507" width="2" height="1"/><rect x="1317" y="540" width="2" height="1"/><rect x="1317" y="573" width="2" height="1"/><rect x="1317" y="606" width="2" height="1"/><rect x="1317" y="639" width="2" height="1"/><rect x="1317" y="672" width="2" height="1"/><rect x="13" y="676" width="1" height="3"/><rect x="77" y="676" width="1" height="3"/><rect x="141" y="676" width="1" height="3"/><rect x="205" y="676" width="1" height="3"/><rect x="269" y="676" width="1" height="3"/><rect x="333" y="676" width="1" height="3"/><rect x="397" y="676" width="1" height="3"/><rect x="461" y="676" width="1" height="3"/><rect x="525" y="676" width="1" height="3"/><rect x="589" y="676" width="1" height="3"/><rect x="653" y="676" width="1" height="3"/><rect x="717" y="676" width="1" height="3"/><rect x="781" y="676" width="1" height="3"/><rect x="845" y="676" width="1" height="3"/><rect x="909" y="676" width="1" height="3"/><rect x="973" y="676" width="1" height="3"/><rect x="1037" y="676" width="1" height="3"/></g><rect x="1318" y="556" width="41" height="11" fill="#000" shape-rendering="crispEdges"/><path d="M1049 110 L1058 110 L1053.5 115 Z" fill="#c0c0c0"/><path d="M1065.6 562 H1072.4 V574.9 H1076 L1069 582.2 L1062 574.9 H1065.6 Z" fill="none" stroke="#ff0000" stroke-width="2"/></svg>
<div class="abs" style="left:14px;top:112px;width:243px;height:11px;background:#fff;"></div><svg width="30" height="130"><path d="M16 116 L23.5 116 L19.75 120 Z" fill="#000"/></svg><div class="t" style="left:28.80px;top:114.00px;font-size:10px;color:#000;text-rendering:geometricPrecision;transform:scaleX(0.9535);transform-origin:0 0;">AUDUSDh,Weekly</div><div class="t" style="left:114.20px;top:114.00px;font-size:10px;color:#000;text-rendering:geometricPrecision;transform:scaleX(0.9208);transform-origin:0 0;">0.81467 0.81727 0.80876 0.81218</div><div class="t" style="left:1322.30px;top:107.00px;font-size:10px;color:#000;text-rendering:geometricPrecision;transform:scaleX(0.9047);transform-origin:0 0;">1.20795</div><div class="t" style="left:1322.30px;top:140.00px;font-size:10px;color:#000;text-rendering:geometricPrecision;transform:scaleX(0.9047);transform-origin:0 0;">1.17905</div><div class="t" style="left:1322.30px;top:173.00px;font-size:10px;color:#000;text-rendering:geometricPrecision;transform:scaleX(0.9047);transform-origin:0 0;">1.15015</div><div class="t" style="left:1322.30px;top:206.00px;font-size:10px;color:#000;text-rendering:geometricPrecision;transform:scaleX(0.9047);transform-origin:0 0;">1.12125</div><div class="t" style="left:1322.30px;top:239.00px;font-size:10px;color:#000;text-rendering:geometricPrecision;transform:scaleX(0.9047);transform-origin:0 0;">1.09235</div><div class="t" style="left:1322.30px;top:272.00px;font-size:10px;color:#000;text-rendering:geometricPrecision;transform:scaleX(0.9047);transform-origin:0 0;">1.06345</div><div class="t" style="left:1322.30px;top:305.00px;font-size:10px;color:#000;text-rendering:geometricPrecision;transform:scaleX(0.9047);transform-origin:0 0;">1.03455</div><div class="t" style="left:1322.30px;top:338.00px;font-size:10px;color:#000;text-rendering:geometricPrecision;transform:scaleX(0.9047);transform-origin:0 0;">1.00565</div><div class="t" style="left:1322.30px;top:371.00px;font-size:10px;color:#000;text-rendering:geometricPrecision;transform:scaleX(0.9047);transform-origin:0 0;">0.97675</div><div class="t" style="left:1322.30px;top:404.00px;font-size:10px;color:#000;text-rendering:geometricPrecision;transform:scaleX(0.9047);transform-origin:0 0;">0.94785</div><div class="t" style="left:1322.30px;top:437.00px;font-size:10px;color:#000;text-rendering:geometricPrecision;transform:scaleX(0.9047);transform-origin:0 0;">0.91895</div><div class="t" style="left:1322.30px;top:470.00px;font-size:10px;color:#000;text-rendering:geometricPrecision;transform:scaleX(0.9047);transform-origin:0 0;">0.89005</div><div class="t" style="left:1322.30px;top:503.00px;font-size:10px;color:#000;text-rendering:geometricPrecision;transform:scaleX(0.9237);transform-origin:0 0;">0.86115</div><div class="t" style="left:1322.30px;top:536.00px;font-size:10px;color:#000;text-rendering:geometricPrecision;transform:scaleX(0.9047);transform-origin:0 0;">0.83225</div><div class="t" style="left:1322.30px;top:569.00px;font-size:10px;color:#000;text-rendering:geometricPrecision;transform:scaleX(0.9047);transform-origin:0 0;">0.80335</div><div class="t" style="left:1322.30px;top:602.00px;font-size:10px;color:#000;text-rendering:geometricPrecision;transform:scaleX(0.9047);transform-origin:0 0;">0.77445</div><div class="t" style="left:1322.30px;top:635.00px;font-size:10px;color:#000;text-rendering:geometricPrecision;transform:scaleX(0.9047);transform-origin:0 0;">0.74555</div><div class="t" style="left:1322.30px;top:668.00px;font-size:10px;color:#000;text-rendering:geometricPrecision;transform:scaleX(0.9047);transform-origin:0 0;">0.71665</div><div class="t" style="left:1322.30px;top:558.00px;font-size:10px;color:#fff;text-rendering:geometricPrecision;transform:scaleX(0.9047);transform-origin:0 0;">0.81218</div><div class="t" style="left:1292.28px;top:216.00px;font-size:10px;color:#000;text-rendering:geometricPrecision;transform:scaleX(0.9000);transform-origin:0 0;">100.0</div><div class="t" style="left:1297.29px;top:437.00px;font-size:10px;color:#000;text-rendering:geometricPrecision;transform:scaleX(0.9000);transform-origin:0 0;">61.8</div><div class="t" style="left:1297.29px;top:504.00px;font-size:10px;color:#000;text-rendering:geometricPrecision;transform:scaleX(0.9000);transform-origin:0 0;">50.0</div><div class="t" style="left:1297.29px;top:572.00px;font-size:10px;color:#000;text-rendering:geometricPrecision;transform:scaleX(0.9000);transform-origin:0 0;">38.2</div><div class="t" style="left:1297.29px;top:657.00px;font-size:10px;color:#000;text-rendering:geometricPrecision;transform:scaleX(0.9000);transform-origin:0 0;">23.6</div><div class="t" style="left:12.40px;top:681.00px;font-size:10px;color:#000;text-rendering:geometricPrecision;transform:scaleX(0.9360);transform-origin:0 0;">10 Jan 2010</div><div class="t" style="left:76.40px;top:681.00px;font-size:10px;color:#000;text-rendering:geometricPrecision;transform:scaleX(0.9360);transform-origin:0 0;">2 May 2010</div><div class="t" style="left:140.40px;top:681.00px;font-size:10px;color:#000;text-rendering:geometricPrecision;transform:scaleX(0.9360);transform-origin:0 0;">22 Aug 2010</div><div class="t" style="left:204.40px;top:681.00px;font-size:10px;color:#000;text-rendering:geometricPrecision;transform:scaleX(0.9360);transform-origin:0 0;">12 Dec 2010</div><div class="t" style="left:268.40px;top:681.00px;font-size:10px;color:#000;text-rendering:geometricPrecision;transform:scaleX(0.9360);transform-origin:0 0;">3 Apr 2011</div><div class="t" style="left:332.40px;top:681.00px;font-size:10px;color:#000;text-rendering:geometricPrecision;transform:scaleX(0.9360);transform-origin:0 0;">24 Jul 2011</div><div class="t" style="left:396.40px;top:681.00px;font-size:10px;color:#000;text-rendering:geometricPrecision;transform:scaleX(0.9360);transform-origin:0 0;">13 Nov 2011</div><div class="t" style="left:460.40px;top:681.00px;font-size:10px;color:#000;text-rendering:geometricPrecision;transform:scaleX(0.9360);transform-origin:0 0;">4 Mar 2012</div><div class="t" style="left:524.40px;top:681.00px;font-size:10px;color:#000;text-rendering:geometricPrecision;transform:scaleX(0.9360);transform-origin:0 0;">24 Jun 2012</div><div class="t" style="left:588.40px;top:681.00px;font-size:10px;color:#000;text-rendering:geometricPrecision;transform:scaleX(0.9360);transform-origin:0 0;">14 Oct 2012</div><div class="t" style="left:652.40px;top:681.00px;font-size:10px;color:#000;text-rendering:geometricPrecision;transform:scaleX(0.9360);transform-origin:0 0;">3 Feb 2013</div><div class="t" style="left:716.40px;top:681.00px;font-size:10px;color:#000;text-rendering:geometricPrecision;transform:scaleX(0.9360);transform-origin:0 0;">26 May 2013</div><div class="t" style="left:780.40px;top:681.00px;font-size:10px;color:#000;text-rendering:geometricPrecision;transform:scaleX(0.9360);transform-origin:0 0;">15 Sep 2013</div><div class="t" style="left:844.40px;top:681.00px;font-size:10px;color:#000;text-rendering:geometricPrecision;transform:scaleX(0.9360);transform-origin:0 0;">5 Jan 2014</div><div class="t" style="left:908.40px;top:681.00px;font-size:10px;color:#000;text-rendering:geometricPrecision;transform:scaleX(0.9360);transform-origin:0 0;">27 Apr 2014</div><div class="t" style="left:972.40px;top:681.00px;font-size:10px;color:#000;text-rendering:geometricPrecision;transform:scaleX(0.9360);transform-origin:0 0;">17 Aug 2014</div><div class="t" style="left:1036.40px;top:681.00px;font-size:10px;color:#000;text-rendering:geometricPrecision;transform:scaleX(0.9360);transform-origin:0 0;">7 Dec 2014</div><div class="t" style="left:1008.00px;top:587.37px;font-size:28.5px;color:#000;letter-spacing:-0.694px;">0.7950</div>
<div class="abs" style="left:8px;top:695px;width:1353px;height:20px;background:#f0f0f0;"></div><div class="abs" style="left:8px;top:695px;width:1353px;height:1px;background:#000;"></div><div class="abs" style="left:8px;top:696px;width:2px;height:18px;background:#808080;"></div><div class="abs" style="left:616px;top:695px;width:108px;height:19px;background:#000;"></div><div class="abs" style="left:618px;top:695px;width:104px;height:17px;background:#fff;"></div><div class="t" style="left:23.00px;top:698.54px;font-size:10.7px;color:#70707f;letter-spacing:-0.238px;">EURUSDh,Monthly</div><div class="t" style="left:133.00px;top:698.54px;font-size:10.7px;color:#70707f;letter-spacing:-0.358px;">USDCHFh,H1</div><div class="t" style="left:217.00px;top:698.54px;font-size:10.7px;color:#70707f;letter-spacing:-0.305px;">GBPUSDh,Monthly</div><div class="t" style="left:325.00px;top:698.54px;font-size:10.7px;color:#70707f;letter-spacing:-0.359px;">USDJPYh,M30</div><div class="t" style="left:414.00px;top:698.54px;font-size:10.7px;color:#70707f;letter-spacing:-0.287px;">EURJPYh,Weekly</div><div class="t" style="left:517.00px;top:698.54px;font-size:10.7px;color:#70707f;letter-spacing:-0.232px;">GBPCHFh,Monthly</div><div class="t" style="left:733.50px;top:698.54px;font-size:10.7px;color:#70707f;letter-spacing:-0.592px;">GBPJPYh,H1</div><div class="t" style="left:814.00px;top:698.54px;font-size:10.7px;color:#70707f;letter-spacing:-0.539px;">EURGBPh,H1</div><div class="t" style="left:898.30px;top:698.54px;font-size:10.7px;color:#70707f;letter-spacing:-0.299px;">USDCADh,Daily</div><div class="t" style="left:994.30px;top:698.54px;font-size:10.7px;color:#70707f;letter-spacing:-0.338px;">XAUUSDh,Daily</div><div class="t" style="left:1091.20px;top:698.54px;font-size:10.7px;color:#70707f;letter-spacing:-0.338px;">USDCADh,H4</div><div class="t" style="left:1177.10px;top:698.54px;font-size:10.7px;color:#70707f;letter-spacing:-0.318px;">NZDUSDh,H4</div><div class="t" style="left:627.00px;top:698.54px;font-size:10.7px;color:#000;letter-spacing:-0.299px;">AUDUSDh,Weekly</div><div class="abs" style="left:1262px;top:697px;width:63px;height:16px;overflow:hidden;"><div class="t" style="left:-0.60px;top:1.54px;font-size:10.7px;color:#70707f;letter-spacing:-0.242px;">AUDNZDh,Weekly</div></div><div class="abs" style="left:124.1px;top:699px;width:1px;height:11px;background:#555;"></div><div class="abs" style="left:208.1px;top:699px;width:1px;height:11px;background:#555;"></div><div class="abs" style="left:316.5px;top:699px;width:1px;height:11px;background:#555;"></div><div class="abs" style="left:404.5px;top:699px;width:1px;height:11px;background:#555;"></div><div class="abs" style="left:508.5px;top:699px;width:1px;height:11px;background:#555;"></div><div class="abs" style="left:805.5px;top:699px;width:1px;height:11px;background:#555;"></div><div class="abs" style="left:888.8px;top:699px;width:1px;height:11px;background:#555;"></div><div class="abs" style="left:984.3px;top:699px;width:1px;height:11px;background:#555;"></div><div class="abs" style="left:1080.2px;top:699px;width:1px;height:11px;background:#555;"></div><div class="abs" style="left:1168.1px;top:699px;width:1px;height:11px;background:#555;"></div><div class="abs" style="left:1252.0px;top:699px;width:1px;height:11px;background:#555;"></div><svg width="1369" height="744"><path d="M1336.2 701.8 L1336.2 708.2 L1332.8 705 Z" fill="#a0a0a0"/><path d="M1350 701.8 L1350 708.2 L1353.4 705 Z" fill="#000"/></svg><div class="abs" style="left:8px;top:715px;width:1353px;height:21px;background:#f0f0f0;"></div><div class="abs" style="left:8px;top:715px;width:1353px;height:1px;background:#fcfcfc;"></div><div class="t" style="left:10.50px;top:722.07px;font-size:11.5px;color:#000;letter-spacing:-0.024px;">Для справки, нажмите F1</div><div class="t" style="left:641.70px;top:721.57px;font-size:11.5px;color:#000;letter-spacing:0.081px;">Default</div><div class="t" style="left:1269.00px;top:721.77px;font-size:11.5px;color:#000;letter-spacing:-0.174px;">18/1 kb</div><div class="abs" style="left:634.9px;top:719px;width:1px;height:16px;background:#a8a8a8;"></div><div class="abs" style="left:751.1px;top:719px;width:1px;height:16px;background:#a8a8a8;"></div><div class="abs" style="left:853.0px;top:719px;width:1px;height:16px;background:#a8a8a8;"></div><div class="abs" style="left:924.5px;top:719px;width:1px;height:16px;background:#a8a8a8;"></div><div class="abs" style="left:994.5px;top:719px;width:1px;height:16px;background:#a8a8a8;"></div><div class="abs" style="left:1063.0px;top:719px;width:1px;height:16px;background:#a8a8a8;"></div><div class="abs" style="left:1133.0px;top:719px;width:1px;height:16px;background:#a8a8a8;"></div><div class="abs" style="left:1199.5px;top:719px;width:1px;height:16px;background:#a8a8a8;"></div><svg width="1369" height="744"><rect x="1205" y="721" width="2" height="10.0" fill="#6b8e23"/><rect x="1205" y="731.0" width="2" height="1.0" fill="#a52a2a"/><rect x="1208" y="721" width="2" height="8.7" fill="#6b8e23"/><rect x="1208" y="729.7" width="2" height="2.3" fill="#a52a2a"/><rect x="1211" y="721" width="2" height="7.4" fill="#6b8e23"/><rect x="1211" y="728.4" width="2" height="3.6" fill="#a52a2a"/><rect x="1214" y="721" width="2" height="6.1" fill="#6b8e23"/><rect x="1214" y="727.1" width="2" height="4.9" fill="#a52a2a"/><rect x="1217" y="721" width="2" height="4.8" fill="#6b8e23"/><rect x="1217" y="725.8" width="2" height="6.2" fill="#a52a2a"/><rect x="1220" y="721" width="2" height="3.5" fill="#6b8e23"/><rect x="1220" y="724.5" width="2" height="7.5" fill="#a52a2a"/><rect x="1223" y="721" width="2" height="2.2" fill="#6b8e23"/><rect x="1223" y="723.2" width="2" height="8.8" fill="#a52a2a"/><rect x="1226" y="721" width="2" height="0.9" fill="#6b8e23"/><rect x="1226" y="721.9" width="2" height="10.1" fill="#a52a2a"/><g stroke-width="1.1"><g stroke="#a4a4a4"><line x1="1347" y1="736" x2="1361" y2="722"/><line x1="1351" y1="736" x2="1361" y2="726"/><line x1="1355" y1="736" x2="1361" y2="730"/></g><g stroke="#fff"><line x1="1348.4" y1="736" x2="1361" y2="723.4"/><line x1="1352.4" y1="736" x2="1361" y2="727.4"/><line x1="1356.4" y1="736" x2="1361" y2="731.4"/></g></g></svg><div class="abs" style="left:0;top:728px;width:1366px;height:16px;background:rgba(50,115,85,0.55);"></div><div class="abs" style="left:0;top:728px;width:1366px;height:1px;background:rgba(40,90,70,0.35);"></div><svg width="1369" height="744"><path d="M12.5 737 L23 735.4 L23 744 L12.5 744 Z M24.5 735.2 L37.5 733.2 L37.5 744 L24.5 744 Z" fill="#fff"/><rect x="66" y="733" width="30" height="11" fill="#0a8a0a"/><path d="M71.5 744 L73 739.5 L89 739.5 L90.5 744 Z" fill="#fff"/><path d="M76.5 740 A4.5 4 0 0 1 85.5 740" fill="none" stroke="#fff" stroke-width="1.2"/><path d="M128 736.5 L145 734 L145 744 L128 744 Z" fill="#2b579a"/><rect x="145.5" y="736.5" width="11" height="8" fill="#fff" stroke="#2b579a"/><rect x="147" y="739" width="8" height="1.5" fill="#2b579a"/><rect x="147" y="742" width="8" height="1.5" fill="#2b579a"/><path d="M131 742 L133 744 M135 742 L137 744" stroke="#fff" stroke-width="1"/><rect x="176.5" y="728.5" width="57" height="17" fill="rgba(255,255,255,0.16)" stroke="rgba(255,255,255,0.38)"/><circle cx="205" cy="748" r="14.3" fill="#dd4b3e"/><path d="M191.5 744 L194 741 L198 744 Z" fill="#4caf50"/><path d="M218.5 744 L216 741.5 L212 744 Z" fill="#ffcd40"/><circle cx="205" cy="748" r="6.3" fill="#f1f1f1"/><circle cx="205" cy="748" r="5" fill="#4a8af4"/><path d="M251.5 744 L251.5 734.5 Q251.5 733 253 733 L272 733 L279.5 741 L279.5 744 Z" fill="#a8c8f0"/><path d="M254 744 L254 735 L271 735 L277.5 742 L277.5 744 Z" fill="#78aae8"/><path d="M259.5 744 A6.5 5.5 0 0 1 272.5 744 Z" fill="#fff"/><path d="M266 739 L270 744 L266 744 Z" fill="#78aae8"/><path d="M313.5 744 L313.5 734.5 Q313.5 733 315 733 L332 733 L339.5 741 L339.5 744 Z" fill="#f4f4f4" stroke="#d0d0d0" stroke-width="0.6"/><path d="M320.5 744 L322 741 Q322.5 739.3 325 739.3 L329.5 739.3 L329.5 744 L327.3 744 L327.3 741.2 L325.3 741.2 Q324.3 741.2 323.8 742.3 L323 744 Z" fill="#e0261c"/><rect x="362.5" y="728.5" width="57" height="17" fill="rgba(255,255,255,0.16)" stroke="rgba(255,255,255,0.38)"/><circle cx="390.5" cy="747" r="14.8" fill="#f6f6f6"/><path d="M377.5 739.5 L382.5 735 L390.5 742.5 L398.5 735 L403.5 739.5 L396 744 L385 744 Z" fill="#e3241b"/><rect x="424.5" y="728.5" width="57" height="17" fill="rgba(255,255,255,0.16)" stroke="rgba(255,255,255,0.38)"/><circle cx="452" cy="748" r="15" fill="#12b0f2"/><path d="M446 744 Q447 741 452 741 Q457 741 458 744 Z" fill="#fff"/><rect x="486.5" y="728.5" width="57" height="17" fill="rgba(255,255,255,0.16)" stroke="rgba(255,255,255,0.38)"/><ellipse cx="515.5" cy="744" rx="14.5" ry="11.5" fill="#f79a32"/><ellipse cx="515.5" cy="745" rx="11" ry="6.5" fill="#fde6c8"/><rect x="548.5" y="728.5" width="57" height="17" fill="rgba(110,175,215,0.62)" stroke="rgba(175,215,240,0.9)"/><rect x="562.5" y="733.5" width="17" height="11" fill="#e4eefa" stroke="#5a8fd0"/><rect x="568.5" y="737.5" width="18" height="8" fill="#e4eefa" stroke="#3a7ad0"/><rect x="569" y="738" width="17" height="2" fill="#3a7ad0"/><rect x="565" y="741" width="5" height="3" fill="#d08030"/><rect x="610.5" y="728.5" width="57" height="17" fill="rgba(255,255,255,0.28)" stroke="rgba(255,255,255,0.75)"/><circle cx="638.5" cy="751" r="15.5" fill="#b3261a"/><path d="M630 744 Q631 741 634 740 L634 744 Z" fill="#f0d0c8"/><path d="M1159.5 744 L1161.5 742.3 L1163.5 744 Z" fill="#fff"/><rect x="1176" y="743" width="15" height="1" fill="#fff" opacity="0.9"/><rect x="1201" y="742.6" width="4" height="1.4" fill="#fff"/><rect x="1206" y="743" width="9" height="1" fill="#fff" opacity="0.9"/><rect x="1235" y="743" width="3" height="1" fill="#fff"/></svg><div class="t" style="left:1307.80px;top:734.60px;font-size:13px;color:#fff;letter-spacing:-1.226px;">14:29</div><div class="abs" style="left:1366px;top:0;width:3px;height:744px;background:#fff;"></div>
</div></body></html>
